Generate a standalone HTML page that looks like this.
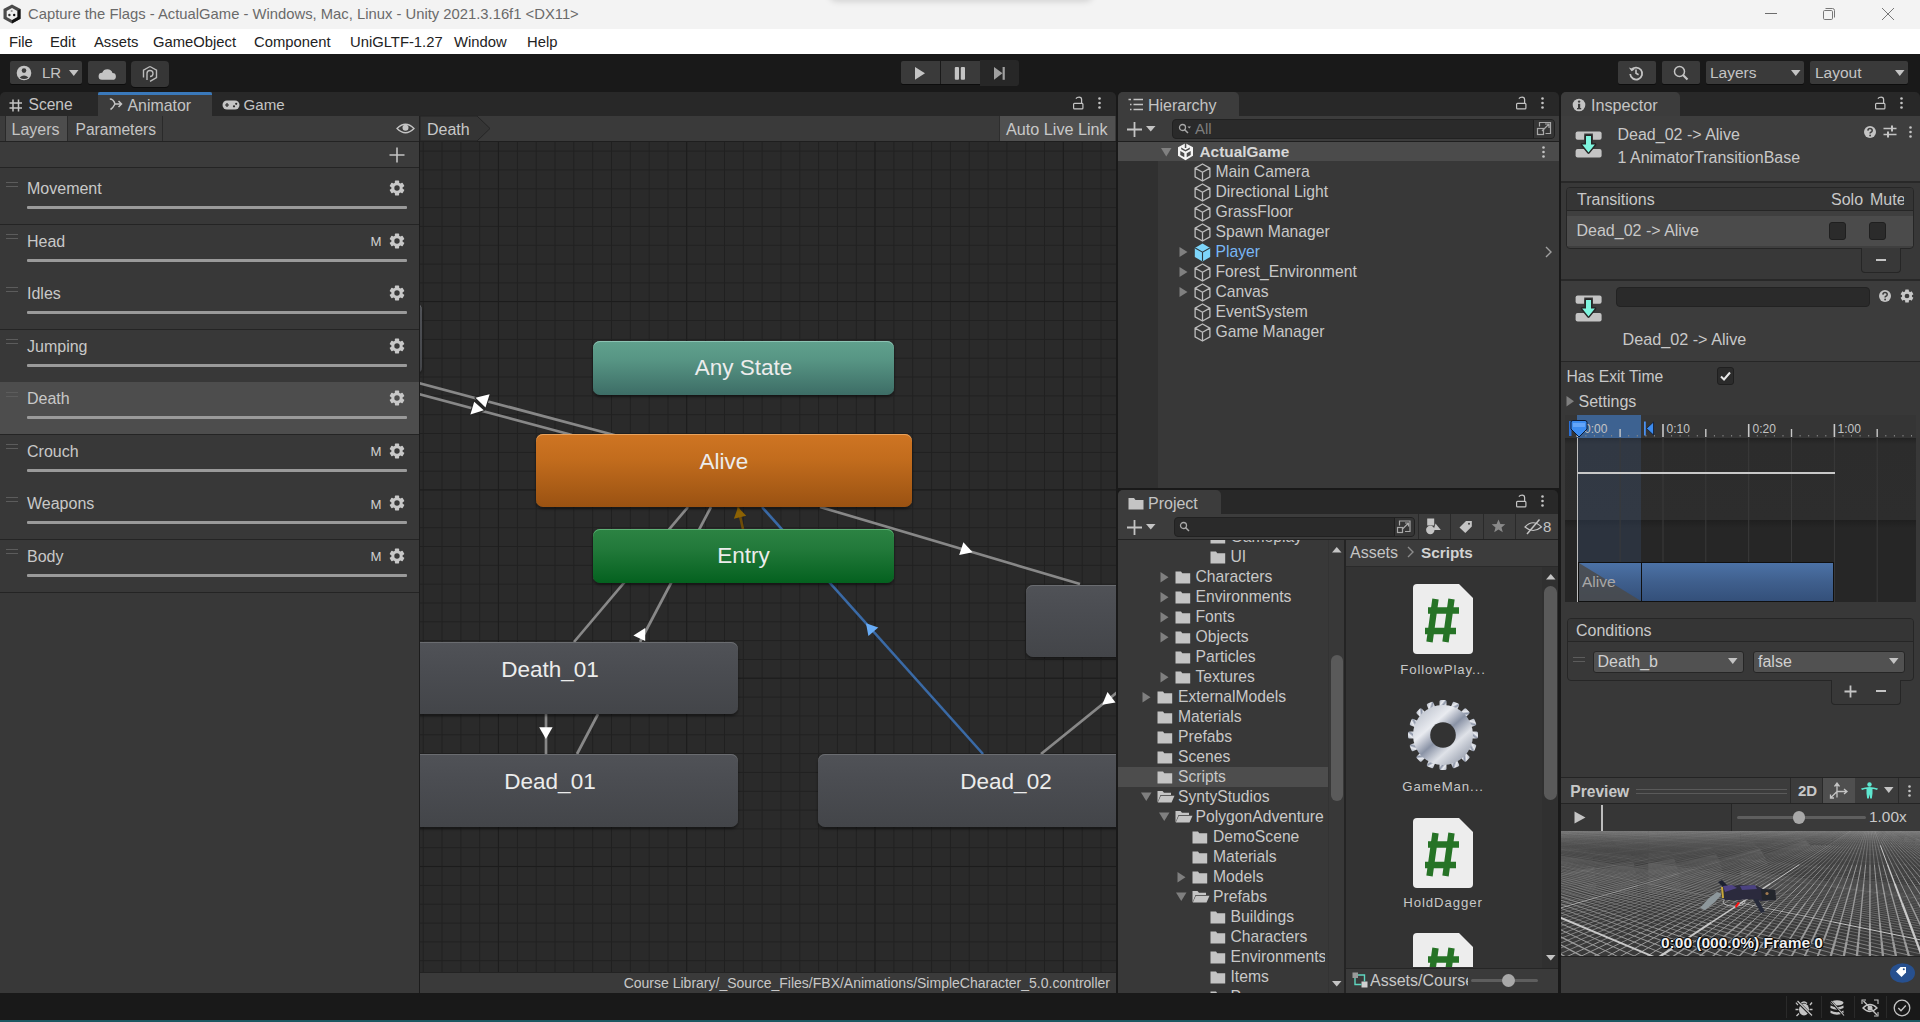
<!DOCTYPE html><html><head><meta charset="utf-8"><style>
html,body{margin:0;padding:0;width:1920px;height:1022px;overflow:hidden;background:#191919;}
body{position:relative;font-family:"Liberation Sans",sans-serif;}
.a{position:absolute;}
.t{white-space:nowrap;}
svg{overflow:visible;}
</style></head><body>
<div class="a" style="left:0px;top:0px;width:1920px;height:29px;background:#f3f3f3;"></div>
<div class="a" style="left:830px;top:-20px;width:262px;height:20px;background:#f3f3f3;box-shadow:0 1px 7px rgba(0,0,0,0.16);border-radius:0 0 6px 6px;"></div>
<div class="a t" style="top:5.0px;line-height:19px;font-size:14.8px;color:#6a6a6a;left:28px;">Capture the Flags - ActualGame - Windows, Mac, Linux - Unity 2021.3.16f1 &lt;DX11&gt;</div>
<svg class="a" style="left:3px;top:4px;" width="18" height="20" viewBox="0 0 18 20"><path d="M9 0.4 L17.5 5 V14.8 L9 19.4 L0.5 14.8 V5Z" fill="#4a4a4a"/><path d="M17.5 5 V14.8 L9 19.4 V16 L14.3 13 V7Z" fill="#111"/><path d="M9 4 L14.3 7 V13 L9 16 L3.7 13 V7Z" fill="#f0f0f0"/><circle cx="8.7" cy="7" r="1.1" fill="#999"/><circle cx="6.4" cy="11" r="1.2" fill="#333"/><circle cx="11.2" cy="11" r="1.2" fill="#111"/></svg>
<div class="a" style="left:1765px;top:13px;width:12px;height:1px;background:#6c6c6c;"></div>
<svg class="a" style="left:1822px;top:7px;" width="14" height="14" viewBox="0 0 14 14"><rect x="1.5" y="3.5" width="9" height="9" rx="1.2" fill="none" stroke="#777" stroke-width="1"/><path d="M3.5 1.5 H10.5 Q12.5 1.5 12.5 3.5 V10.5" fill="none" stroke="#777" stroke-width="1"/></svg>
<svg class="a" style="left:1881px;top:7px;" width="14" height="14" viewBox="0 0 14 14"><path d="M1 1 L13 13 M13 1 L1 13" stroke="#777" stroke-width="1"/></svg>
<div class="a" style="left:0px;top:29px;width:1920px;height:25px;background:#ffffff;"></div>
<div class="a t" style="top:32.5px;line-height:19px;font-size:14.8px;color:#222222;left:9px;">File</div>
<div class="a t" style="top:32.5px;line-height:19px;font-size:14.8px;color:#222222;left:50px;">Edit</div>
<div class="a t" style="top:32.5px;line-height:19px;font-size:14.8px;color:#222222;left:94px;">Assets</div>
<div class="a t" style="top:32.5px;line-height:19px;font-size:14.8px;color:#222222;left:153px;">GameObject</div>
<div class="a t" style="top:32.5px;line-height:19px;font-size:14.8px;color:#222222;left:254px;">Component</div>
<div class="a t" style="top:32.5px;line-height:19px;font-size:14.8px;color:#222222;left:350px;">UniGLTF-1.27</div>
<div class="a t" style="top:32.5px;line-height:19px;font-size:14.8px;color:#222222;left:454px;">Window</div>
<div class="a t" style="top:32.5px;line-height:19px;font-size:14.8px;color:#222222;left:527px;">Help</div>
<div class="a" style="left:0px;top:54px;width:1920px;height:38px;background:#191919;"></div>
<div class="a" style="left:10px;top:61px;width:72px;height:23px;background:#3a3a3a;border-radius:2px;box-shadow:0 1px 0 #0d0d0d;"></div>
<svg class="a" style="left:16px;top:65px;" width="16" height="16" viewBox="0 0 16 16"><circle cx="8" cy="8" r="7.3" fill="#c4c4c4"/><circle cx="8" cy="5.6" r="2.3" fill="#3a3a3a"/><path d="M3.6 12.6 Q8 8.6 12.4 12.6 Q8 15.6 3.6 12.6Z" fill="#3a3a3a"/></svg>
<div class="a t" style="top:63.0px;line-height:20px;font-size:15px;color:#c4c4c4;left:42px;">LR</div>
<svg class="a" style="left:69px;top:70px;" width="10" height="6" viewBox="0 0 10 6"><path d="M0 0 H9.5 L4.75 6 Z" fill="#c4c4c4"/></svg>
<div class="a" style="left:88px;top:61px;width:38px;height:23px;background:#3a3a3a;border-radius:2px;box-shadow:0 1px 0 #0d0d0d;"></div>
<svg class="a" style="left:98px;top:67px;" width="18" height="13" viewBox="0 0 18 13"><path d="M4 12.8 H14.5 A3.4 3.4 0 0 0 14.5 6 A5.5 5.5 0 0 0 4.2 5.8 A3.5 3.5 0 0 0 4 12.8Z" fill="#c4c4c4"/></svg>
<div class="a" style="left:131px;top:61px;width:38px;height:26px;background:#363636;border-radius:4px;box-shadow:0 1px 0 #0d0d0d;"></div>
<svg class="a" style="left:141px;top:65px;" width="18" height="18" viewBox="0 0 18 18"><path d="M9 1.5 L15.5 5.2 V12.5 L9 16.3" fill="none" stroke="#bbb" stroke-width="1.4"/><path d="M9 1.5 L2.5 5.2 V12.5" fill="none" stroke="#bbb" stroke-width="1.4"/><path d="M6 15 V8.5 A3 3 0 1 1 9 11.5" fill="none" stroke="#bbb" stroke-width="1.4"/></svg>
<div class="a" style="left:901px;top:61px;width:79px;height:23px;background:#3a3a3a;border-radius:2px 0 0 2px;box-shadow:0 1px 0 #0d0d0d;"></div>
<div class="a" style="left:940px;top:61px;width:1px;height:23px;background:#1a1a1a;"></div>
<div class="a" style="left:980px;top:60px;width:39px;height:26px;background:#272727;border-radius:0 3px 3px 0;"></div>
<svg class="a" style="left:914px;top:66px;" width="12" height="15" viewBox="0 0 12 15"><path d="M1 1 L11 7.3 L1 13.8Z" fill="#c4c4c4"/></svg>
<svg class="a" style="left:954px;top:66px;" width="12" height="15" viewBox="0 0 12 15"><rect x="0.8" y="1" width="4.2" height="12.8" rx="1" fill="#c4c4c4"/><rect x="6.8" y="1" width="4.2" height="12.8" rx="1" fill="#c4c4c4"/></svg>
<svg class="a" style="left:993px;top:66px;" width="13" height="15" viewBox="0 0 13 15"><path d="M1 1 L9.5 7.3 L1 13.8Z" fill="#a0a0a0"/><rect x="9.6" y="1" width="2.2" height="12.8" fill="#a0a0a0"/></svg>
<div class="a" style="left:1618px;top:61px;width:38px;height:23px;background:#3a3a3a;border-radius:2px;box-shadow:0 1px 0 #0d0d0d;"></div>
<div class="a" style="left:1662px;top:61px;width:38px;height:23px;background:#3a3a3a;border-radius:2px;box-shadow:0 1px 0 #0d0d0d;"></div>
<svg class="a" style="left:1628px;top:65px;" width="16" height="16" viewBox="0 0 16 16"><path d="M3.2 5.2 A6 6 0 1 1 2.2 9" fill="none" stroke="#c4c4c4" stroke-width="1.8"/><path d="M0.8 2.5 L3.6 6.2 L6.8 4.4Z" fill="#c4c4c4"/><path d="M8 4.5 V8.3 L10.6 9.8" fill="none" stroke="#c4c4c4" stroke-width="1.6"/></svg>
<svg class="a" style="left:1673px;top:65px;" width="16" height="16" viewBox="0 0 16 16"><circle cx="6.5" cy="6.5" r="5" fill="none" stroke="#c4c4c4" stroke-width="1.5"/><path d="M10 10 L14.5 14.5" stroke="#c4c4c4" stroke-width="2.2"/></svg>
<div class="a" style="left:1706px;top:61px;width:98px;height:23px;background:#3a3a3a;border-radius:2px;box-shadow:0 1px 0 #0d0d0d;"></div>
<div class="a" style="left:1810px;top:61px;width:98px;height:23px;background:#3a3a3a;border-radius:2px;box-shadow:0 1px 0 #0d0d0d;"></div>
<div class="a t" style="top:63.0px;line-height:20px;font-size:15.5px;color:#c4c4c4;left:1710px;">Layers</div>
<svg class="a" style="left:1791px;top:70px;" width="10" height="7" viewBox="0 0 10 7"><path d="M0 0 H9.5 L4.75 6 Z" fill="#c4c4c4"/></svg>
<div class="a t" style="top:63.0px;line-height:20px;font-size:15.5px;color:#c4c4c4;left:1815px;">Layout</div>
<svg class="a" style="left:1895px;top:70px;" width="10" height="7" viewBox="0 0 10 7"><path d="M0 0 H9.5 L4.75 6 Z" fill="#c4c4c4"/></svg>
<div class="a" style="left:0px;top:92px;width:1116px;height:24px;background:#282828;border-radius:5px 5px 0 0;"></div>
<div class="a" style="left:98px;top:92px;width:114px;height:24px;background:#3c3c3c;"></div>
<div class="a" style="left:98px;top:92px;width:114px;height:3px;background:#3a79bb;border-radius:2px 2px 0 0;"></div>
<div class="a t" style="top:95.0px;line-height:20px;font-size:15.6px;color:#c4c4c4;left:28.5px;">Scene</div>
<svg class="a" style="left:9px;top:99px;" width="14" height="13" viewBox="0 0 14 13"><path d="M4 0.5 V12.5 M9.5 0.5 V12.5 M0.5 4 H13 M0.5 9 H13" stroke="#c4c4c4" stroke-width="1.5"/></svg>
<div class="a t" style="top:94.5px;line-height:21px;font-size:15.9px;color:#c4c4c4;left:127.5px;">Animator</div>
<svg class="a" style="left:109px;top:98px;" width="14" height="13" viewBox="0 0 14 13"><path d="M0.8 1 Q4.5 1 6 6 L12.5 6 M9.5 3 L12.5 6 L9.5 9 M6 6 Q4 10 1.5 11.5" fill="none" stroke="#c4c4c4" stroke-width="1.5"/></svg>
<div class="a t" style="top:95.0px;line-height:20px;font-size:15.1px;color:#c4c4c4;left:243.5px;">Game</div>
<svg class="a" style="left:222px;top:100px;" width="18" height="10" viewBox="0 0 18 10"><rect x="0.5" y="0.5" width="17" height="9" rx="4.5" fill="#c4c4c4"/><path d="M3 5 H7 M5 3 V7" stroke="#282828" stroke-width="1.2"/><circle cx="12" cy="6.3" r="1.1" fill="#282828"/><circle cx="14.2" cy="3.8" r="1.1" fill="#282828"/></svg>
<svg class="a" style="left:1073px;top:96px;" width="11" height="14" viewBox="0 0 11 14"><path d="M8.6 7.4 V3.6 Q8.6 1.2 6.1 1.2 Q4 1.2 2.9 2.7" fill="none" stroke="#c4c4c4" stroke-width="1.25"/><rect x="0.6" y="7.4" width="9.3" height="5.5" rx="0.9" fill="none" stroke="#c4c4c4" stroke-width="1.2"/></svg>
<svg class="a" style="left:1097px;top:96px;" width="5" height="14" viewBox="0 0 5 14"><circle cx="2.5" cy="2.5" r="1.3" fill="#c4c4c4"/><circle cx="2.5" cy="7" r="1.3" fill="#c4c4c4"/><circle cx="2.5" cy="11.5" r="1.3" fill="#c4c4c4"/></svg>
<div class="a" style="left:0px;top:116px;width:419px;height:25px;background:#3c3c3c;"></div>
<div class="a" style="left:0px;top:141px;width:419px;height:1px;background:#232323;"></div>
<div class="a" style="left:6px;top:116px;width:61px;height:25px;background:#4d4d4d;"></div>
<div class="a" style="left:5px;top:116px;width:1px;height:25px;background:#2a2a2a;"></div>
<div class="a" style="left:67px;top:116px;width:1px;height:25px;background:#2a2a2a;"></div>
<div class="a" style="left:162px;top:116px;width:1px;height:25px;background:#2a2a2a;"></div>
<div class="a t" style="top:119.3px;line-height:21px;font-size:16px;color:#c4c4c4;left:11.5px;">Layers</div>
<div class="a t" style="top:120.2px;line-height:20px;font-size:15.6px;color:#c4c4c4;left:75.5px;">Parameters</div>
<svg class="a" style="left:396px;top:123px;" width="19" height="11" viewBox="0 0 19 11"><path d="M1 5.5 Q9.5 -3 18 5.5 Q9.5 14 1 5.5Z" fill="none" stroke="#c4c4c4" stroke-width="1.3"/><circle cx="9.5" cy="4.8" r="3" fill="#c4c4c4"/></svg>
<div class="a" style="left:0px;top:142px;width:419px;height:851px;background:#383838;"></div>
<div class="a" style="left:0px;top:142px;width:419px;height:25px;background:#3b3b3b;"></div>
<div class="a" style="left:0px;top:167px;width:419px;height:1px;background:#242424;"></div>
<svg class="a" style="left:389px;top:147px;" width="16" height="16" viewBox="0 0 16 16"><path d="M8 0.5 V15.5 M0.5 8 H15.5" stroke="#c4c4c4" stroke-width="1.6"/></svg>
<svg class="a" style="left:6px;top:182px;" width="13" height="6" viewBox="0 0 13 6"><path d="M0 0.5 H12 M0 4.5 H12" stroke="#5c5c5c" stroke-width="1"/></svg>
<div class="a t" style="top:178.2px;line-height:21px;font-size:16px;color:#c8c8c8;left:27px;">Movement</div>
<div class="a" style="left:27px;top:206px;width:380px;height:3px;background:#9a9a9a;border-radius:1px;"></div>
<svg class="a" style="left:389px;top:180px;" width="16" height="16" viewBox="0 0 16 16"><g fill="#c8c8c8"><rect x="5.9" y="0.6" width="4.2" height="4" rx="0.6" transform="rotate(0 8 8)"/><rect x="5.9" y="0.6" width="4.2" height="4" rx="0.6" transform="rotate(60 8 8)"/><rect x="5.9" y="0.6" width="4.2" height="4" rx="0.6" transform="rotate(120 8 8)"/><rect x="5.9" y="0.6" width="4.2" height="4" rx="0.6" transform="rotate(180 8 8)"/><rect x="5.9" y="0.6" width="4.2" height="4" rx="0.6" transform="rotate(240 8 8)"/><rect x="5.9" y="0.6" width="4.2" height="4" rx="0.6" transform="rotate(300 8 8)"/><circle cx="8" cy="8" r="5.7"/></g><circle cx="8" cy="8" r="2.7" fill="#383838"/></svg>
<svg class="a" style="left:6px;top:234px;" width="13" height="6" viewBox="0 0 13 6"><path d="M0 0.5 H12 M0 4.5 H12" stroke="#5c5c5c" stroke-width="1"/></svg>
<div class="a t" style="top:230.7px;line-height:21px;font-size:16px;color:#c8c8c8;left:27px;">Head</div>
<div class="a" style="left:27px;top:259px;width:380px;height:3px;background:#9a9a9a;border-radius:1px;"></div>
<div class="a t" style="top:233.0px;line-height:17px;font-size:13.2px;color:#d0d0d0;left:370.5px;">M</div>
<svg class="a" style="left:389px;top:233px;" width="16" height="16" viewBox="0 0 16 16"><g fill="#c8c8c8"><rect x="5.9" y="0.6" width="4.2" height="4" rx="0.6" transform="rotate(0 8 8)"/><rect x="5.9" y="0.6" width="4.2" height="4" rx="0.6" transform="rotate(60 8 8)"/><rect x="5.9" y="0.6" width="4.2" height="4" rx="0.6" transform="rotate(120 8 8)"/><rect x="5.9" y="0.6" width="4.2" height="4" rx="0.6" transform="rotate(180 8 8)"/><rect x="5.9" y="0.6" width="4.2" height="4" rx="0.6" transform="rotate(240 8 8)"/><rect x="5.9" y="0.6" width="4.2" height="4" rx="0.6" transform="rotate(300 8 8)"/><circle cx="8" cy="8" r="5.7"/></g><circle cx="8" cy="8" r="2.7" fill="#383838"/></svg>
<svg class="a" style="left:6px;top:287px;" width="13" height="6" viewBox="0 0 13 6"><path d="M0 0.5 H12 M0 4.5 H12" stroke="#5c5c5c" stroke-width="1"/></svg>
<div class="a t" style="top:283.2px;line-height:21px;font-size:16px;color:#c8c8c8;left:27px;">Idles</div>
<div class="a" style="left:27px;top:311px;width:380px;height:3px;background:#9a9a9a;border-radius:1px;"></div>
<svg class="a" style="left:389px;top:285px;" width="16" height="16" viewBox="0 0 16 16"><g fill="#c8c8c8"><rect x="5.9" y="0.6" width="4.2" height="4" rx="0.6" transform="rotate(0 8 8)"/><rect x="5.9" y="0.6" width="4.2" height="4" rx="0.6" transform="rotate(60 8 8)"/><rect x="5.9" y="0.6" width="4.2" height="4" rx="0.6" transform="rotate(120 8 8)"/><rect x="5.9" y="0.6" width="4.2" height="4" rx="0.6" transform="rotate(180 8 8)"/><rect x="5.9" y="0.6" width="4.2" height="4" rx="0.6" transform="rotate(240 8 8)"/><rect x="5.9" y="0.6" width="4.2" height="4" rx="0.6" transform="rotate(300 8 8)"/><circle cx="8" cy="8" r="5.7"/></g><circle cx="8" cy="8" r="2.7" fill="#383838"/></svg>
<svg class="a" style="left:6px;top:339px;" width="13" height="6" viewBox="0 0 13 6"><path d="M0 0.5 H12 M0 4.5 H12" stroke="#5c5c5c" stroke-width="1"/></svg>
<div class="a t" style="top:335.7px;line-height:21px;font-size:16px;color:#c8c8c8;left:27px;">Jumping</div>
<div class="a" style="left:27px;top:364px;width:380px;height:3px;background:#9a9a9a;border-radius:1px;"></div>
<svg class="a" style="left:389px;top:338px;" width="16" height="16" viewBox="0 0 16 16"><g fill="#c8c8c8"><rect x="5.9" y="0.6" width="4.2" height="4" rx="0.6" transform="rotate(0 8 8)"/><rect x="5.9" y="0.6" width="4.2" height="4" rx="0.6" transform="rotate(60 8 8)"/><rect x="5.9" y="0.6" width="4.2" height="4" rx="0.6" transform="rotate(120 8 8)"/><rect x="5.9" y="0.6" width="4.2" height="4" rx="0.6" transform="rotate(180 8 8)"/><rect x="5.9" y="0.6" width="4.2" height="4" rx="0.6" transform="rotate(240 8 8)"/><rect x="5.9" y="0.6" width="4.2" height="4" rx="0.6" transform="rotate(300 8 8)"/><circle cx="8" cy="8" r="5.7"/></g><circle cx="8" cy="8" r="2.7" fill="#383838"/></svg>
<div class="a" style="left:0px;top:382px;width:419px;height:52px;background:#4d4d4d;"></div>
<svg class="a" style="left:6px;top:392px;" width="13" height="6" viewBox="0 0 13 6"><path d="M0 0.5 H12 M0 4.5 H12" stroke="#5c5c5c" stroke-width="1"/></svg>
<div class="a t" style="top:388.2px;line-height:21px;font-size:16px;color:#c8c8c8;left:27px;">Death</div>
<div class="a" style="left:27px;top:416px;width:380px;height:3px;background:#9a9a9a;border-radius:1px;"></div>
<svg class="a" style="left:389px;top:390px;" width="16" height="16" viewBox="0 0 16 16"><g fill="#c8c8c8"><rect x="5.9" y="0.6" width="4.2" height="4" rx="0.6" transform="rotate(0 8 8)"/><rect x="5.9" y="0.6" width="4.2" height="4" rx="0.6" transform="rotate(60 8 8)"/><rect x="5.9" y="0.6" width="4.2" height="4" rx="0.6" transform="rotate(120 8 8)"/><rect x="5.9" y="0.6" width="4.2" height="4" rx="0.6" transform="rotate(180 8 8)"/><rect x="5.9" y="0.6" width="4.2" height="4" rx="0.6" transform="rotate(240 8 8)"/><rect x="5.9" y="0.6" width="4.2" height="4" rx="0.6" transform="rotate(300 8 8)"/><circle cx="8" cy="8" r="5.7"/></g><circle cx="8" cy="8" r="2.7" fill="#4d4d4d"/></svg>
<svg class="a" style="left:6px;top:444px;" width="13" height="6" viewBox="0 0 13 6"><path d="M0 0.5 H12 M0 4.5 H12" stroke="#5c5c5c" stroke-width="1"/></svg>
<div class="a t" style="top:440.7px;line-height:21px;font-size:16px;color:#c8c8c8;left:27px;">Crouch</div>
<div class="a" style="left:27px;top:469px;width:380px;height:3px;background:#9a9a9a;border-radius:1px;"></div>
<div class="a t" style="top:443.0px;line-height:17px;font-size:13.2px;color:#d0d0d0;left:370.5px;">M</div>
<svg class="a" style="left:389px;top:443px;" width="16" height="16" viewBox="0 0 16 16"><g fill="#c8c8c8"><rect x="5.9" y="0.6" width="4.2" height="4" rx="0.6" transform="rotate(0 8 8)"/><rect x="5.9" y="0.6" width="4.2" height="4" rx="0.6" transform="rotate(60 8 8)"/><rect x="5.9" y="0.6" width="4.2" height="4" rx="0.6" transform="rotate(120 8 8)"/><rect x="5.9" y="0.6" width="4.2" height="4" rx="0.6" transform="rotate(180 8 8)"/><rect x="5.9" y="0.6" width="4.2" height="4" rx="0.6" transform="rotate(240 8 8)"/><rect x="5.9" y="0.6" width="4.2" height="4" rx="0.6" transform="rotate(300 8 8)"/><circle cx="8" cy="8" r="5.7"/></g><circle cx="8" cy="8" r="2.7" fill="#383838"/></svg>
<svg class="a" style="left:6px;top:497px;" width="13" height="6" viewBox="0 0 13 6"><path d="M0 0.5 H12 M0 4.5 H12" stroke="#5c5c5c" stroke-width="1"/></svg>
<div class="a t" style="top:493.2px;line-height:21px;font-size:16px;color:#c8c8c8;left:27px;">Weapons</div>
<div class="a" style="left:27px;top:521px;width:380px;height:3px;background:#9a9a9a;border-radius:1px;"></div>
<div class="a t" style="top:495.5px;line-height:17px;font-size:13.2px;color:#d0d0d0;left:370.5px;">M</div>
<svg class="a" style="left:389px;top:495px;" width="16" height="16" viewBox="0 0 16 16"><g fill="#c8c8c8"><rect x="5.9" y="0.6" width="4.2" height="4" rx="0.6" transform="rotate(0 8 8)"/><rect x="5.9" y="0.6" width="4.2" height="4" rx="0.6" transform="rotate(60 8 8)"/><rect x="5.9" y="0.6" width="4.2" height="4" rx="0.6" transform="rotate(120 8 8)"/><rect x="5.9" y="0.6" width="4.2" height="4" rx="0.6" transform="rotate(180 8 8)"/><rect x="5.9" y="0.6" width="4.2" height="4" rx="0.6" transform="rotate(240 8 8)"/><rect x="5.9" y="0.6" width="4.2" height="4" rx="0.6" transform="rotate(300 8 8)"/><circle cx="8" cy="8" r="5.7"/></g><circle cx="8" cy="8" r="2.7" fill="#383838"/></svg>
<svg class="a" style="left:6px;top:549px;" width="13" height="6" viewBox="0 0 13 6"><path d="M0 0.5 H12 M0 4.5 H12" stroke="#5c5c5c" stroke-width="1"/></svg>
<div class="a t" style="top:545.7px;line-height:21px;font-size:16px;color:#c8c8c8;left:27px;">Body</div>
<div class="a" style="left:27px;top:574px;width:380px;height:3px;background:#9a9a9a;border-radius:1px;"></div>
<div class="a t" style="top:548.0px;line-height:17px;font-size:13.2px;color:#d0d0d0;left:370.5px;">M</div>
<svg class="a" style="left:389px;top:548px;" width="16" height="16" viewBox="0 0 16 16"><g fill="#c8c8c8"><rect x="5.9" y="0.6" width="4.2" height="4" rx="0.6" transform="rotate(0 8 8)"/><rect x="5.9" y="0.6" width="4.2" height="4" rx="0.6" transform="rotate(60 8 8)"/><rect x="5.9" y="0.6" width="4.2" height="4" rx="0.6" transform="rotate(120 8 8)"/><rect x="5.9" y="0.6" width="4.2" height="4" rx="0.6" transform="rotate(180 8 8)"/><rect x="5.9" y="0.6" width="4.2" height="4" rx="0.6" transform="rotate(240 8 8)"/><rect x="5.9" y="0.6" width="4.2" height="4" rx="0.6" transform="rotate(300 8 8)"/><circle cx="8" cy="8" r="5.7"/></g><circle cx="8" cy="8" r="2.7" fill="#383838"/></svg>
<div class="a" style="left:0px;top:224px;width:419px;height:1px;background:#242424;"></div>
<div class="a" style="left:0px;top:329px;width:419px;height:1px;background:#242424;"></div>
<div class="a" style="left:0px;top:434px;width:419px;height:1px;background:#242424;"></div>
<div class="a" style="left:0px;top:539px;width:419px;height:1px;background:#242424;"></div>
<div class="a" style="left:0px;top:592px;width:419px;height:1px;background:#242424;"></div>
<div class="a" style="left:419px;top:116px;width:1px;height:877px;background:#1c1c1c;"></div>
<div class="a" style="left:420px;top:116px;width:696px;height:25px;background:#3a3a3a;"></div>
<div class="a" style="left:420px;top:141px;width:696px;height:1px;background:#1e1e1e;"></div>
<svg class="a" style="left:420px;top:116px;" width="72" height="25" viewBox="0 0 72 25"><path d="M0 0 H57 L70 12.5 L57 25 H0Z" fill="#353535" stroke="#252525" stroke-width="1"/></svg>
<div class="a t" style="top:118.5px;line-height:21px;font-size:16px;color:#c8c8c8;left:427px;">Death</div>
<div class="a" style="left:1000px;top:116px;width:115px;height:25px;background:#505050;"></div>
<div class="a" style="left:999px;top:116px;width:1px;height:25px;background:#2e2e2e;"></div>
<div class="a t" style="top:118.5px;line-height:21px;font-size:16.2px;color:#c8c8c8;left:1006px;">Auto Live Link</div>
<div class="a" style="left:420px;top:142px;width:696px;height:830px;background-color:#2a2a2a;background-image:linear-gradient(90deg, #1c1c1c 0 1.3px, transparent 1.3px),linear-gradient(180deg, #1c1c1c 0 1.3px, transparent 1.3px),linear-gradient(90deg, #202020 0 1.1px, transparent 1.1px),linear-gradient(180deg, #202020 0 1.1px, transparent 1.1px);background-size:188.3px 188.3px,188.3px 188.3px,18.83px 18.83px,18.83px 18.83px;background-position:77.85px 0,0 159.05px,2.73px 0,0 8.61px;"></div>
<div class="a" style="left:420px;top:972px;width:696px;height:21px;background:#3a3a3a;border-top:1px solid #232323;box-sizing:border-box;"></div>
<div class="a t" style="top:973.5px;line-height:18px;font-size:14px;color:#c8c8c8;right:810px;">Course Library/_Source_Files/FBX/Animations/SimpleCharacter_5.0.controller</div>
<svg class="a" style="left:420px;top:142px;overflow:hidden;" width="696" height="830" viewBox="0 0 696 830"><line x1="-20" y1="236" x2="196" y2="293.5" stroke="#888888" stroke-width="2.7"/><line x1="-20" y1="247" x2="152" y2="293" stroke="#888888" stroke-width="2.7"/><path d="M55.5 255.7 L69.6 252.2 L65.5 265.6Z" fill="#262626" stroke="#262626" stroke-width="2" stroke-linejoin="round"/><path d="M55.5 255.7 L69.6 252.2 L65.5 265.6Z" fill="#ffffff"/><path d="M54.2 259.8 L50.4 272.5 L63.8 268.3Z" fill="#262626" stroke="#262626" stroke-width="2" stroke-linejoin="round"/><path d="M54.2 259.8 L50.4 272.5 L63.8 268.3Z" fill="#ffffff"/><line x1="154" y1="500" x2="268" y2="365" stroke="#888888" stroke-width="2.7"/><line x1="220" y1="500" x2="291" y2="365" stroke="#888888" stroke-width="2.7"/><path d="M213.4 493.5 L225.2 486.0 L225.2 499.0Z" fill="#ffffff"/><line x1="323" y1="387" x2="318" y2="365" stroke="#6e4c08" stroke-width="2.6"/><path d="M318.0 365.2 L326.2 373.8 L313.9 376.8Z" fill="#8c6204"/><line x1="563" y1="612" x2="342" y2="365" stroke="#3a6aa6" stroke-width="2.6"/><path d="M446.0 481.2 L458.3 485.5 L448.4 494.0Z" fill="#68acf6"/><line x1="400" y1="365" x2="660" y2="442" stroke="#888888" stroke-width="2.7"/><path d="M543.4 400.3 L552.6 410.2 L539.2 412.9Z" fill="#ffffff"/><line x1="621" y1="612" x2="705" y2="544" stroke="#888888" stroke-width="2.7"/><path d="M687.5 550.0 L695.5 560.6 L682.2 562.7Z" fill="#ffffff"/><line x1="126" y1="572" x2="126" y2="612" stroke="#888888" stroke-width="2.7"/><path d="M119.2 585.2 L132.6 585.2 L125.9 597.0Z" fill="#ffffff"/><line x1="157" y1="612" x2="178" y2="572" stroke="#888888" stroke-width="2.7"/></svg>
<div class="a" style="left:420px;top:142px;width:696px;height:830px;overflow:hidden;">
<div class="a" style="left:-58px;top:161px;width:60px;height:71px;border-radius:7px;background:linear-gradient(180deg,#505257 0%,#4b4d52 35%,#434549 100%);box-shadow:inset 0 1px 0 #6a6c70, 0 2px 3px rgba(0,0,0,0.45);"></div>
<div class="a" style="left:173px;top:199px;width:301px;height:54px;border-radius:7px;background:linear-gradient(180deg,#60a18d 0%,#579584 35%,#3d6d66 100%);box-shadow:inset 0 1px 0 #8cc3b3, 0 2px 3px rgba(0,0,0,0.45);"></div>
<div class="a t" style="left:173px;top:211.0px;width:301px;text-align:center;line-height:30px;font-size:22.5px;color:#ececec;">Any State</div>
<div class="a" style="left:116px;top:292px;width:376px;height:73px;border-radius:7px;background:linear-gradient(180deg,#cf7523 0%,#c26c1d 35%,#9a5212 100%);box-shadow:inset 0 1px 0 #e9a25c, 0 2px 3px rgba(0,0,0,0.45);"></div>
<div class="a t" style="left:116px;top:305.0px;width:376px;text-align:center;line-height:30px;font-size:22.5px;color:#ececec;">Alive</div>
<div class="a" style="left:173px;top:387px;width:301px;height:54px;border-radius:7px;background:linear-gradient(180deg,#2c8343 0%,#237a3b 35%,#04611f 100%);box-shadow:inset 0 1px 0 #5db275, 0 2px 3px rgba(0,0,0,0.45);"></div>
<div class="a t" style="left:173px;top:399.0px;width:301px;text-align:center;line-height:30px;font-size:22.5px;color:#ececec;">Entry</div>
<div class="a" style="left:-58px;top:500px;width:376px;height:72px;border-radius:7px;background:linear-gradient(180deg,#505257 0%,#4b4d52 35%,#434549 100%);box-shadow:inset 0 1px 0 #6a6c70, 0 2px 3px rgba(0,0,0,0.45);"></div>
<div class="a t" style="left:-58px;top:512.5px;width:376px;text-align:center;line-height:30px;font-size:22.5px;color:#ececec;">Death_01</div>
<div class="a" style="left:-58px;top:612px;width:376px;height:73px;border-radius:7px;background:linear-gradient(180deg,#505257 0%,#4b4d52 35%,#434549 100%);box-shadow:inset 0 1px 0 #6a6c70, 0 2px 3px rgba(0,0,0,0.45);"></div>
<div class="a t" style="left:-58px;top:625.0px;width:376px;text-align:center;line-height:30px;font-size:22.5px;color:#ececec;">Dead_01</div>
<div class="a" style="left:398px;top:612px;width:376px;height:73px;border-radius:7px;background:linear-gradient(180deg,#505257 0%,#4b4d52 35%,#434549 100%);box-shadow:inset 0 1px 0 #6a6c70, 0 2px 3px rgba(0,0,0,0.45);"></div>
<div class="a t" style="left:398px;top:625.0px;width:376px;text-align:center;line-height:30px;font-size:22.5px;color:#ececec;">Dead_02</div>
<div class="a" style="left:606px;top:443px;width:200px;height:72px;border-radius:7px;background:linear-gradient(180deg,#505257 0%,#4b4d52 35%,#434549 100%);box-shadow:inset 0 1px 0 #6a6c70, 0 2px 3px rgba(0,0,0,0.45);"></div>
</div>
<div class="a" style="left:1118px;top:92px;width:441px;height:24px;background:#282828;border-radius:5px 5px 0 0;"></div>
<div class="a" style="left:1118px;top:92px;width:121px;height:24px;background:#3c3c3c;border-radius:5px 5px 0 0;"></div>
<svg class="a" style="left:1128px;top:98px;" width="16" height="13" viewBox="0 0 16 13"><path d="M5.5 1.5 H15 M5.5 6.5 H15 M5.5 11.5 H15" stroke="#c4c4c4" stroke-width="1.5"/><path d="M0.5 1.5 H3 M2 6.5 H3.5 M2 11.5 H3.5" stroke="#c4c4c4" stroke-width="1.5"/></svg>
<div class="a t" style="top:94.5px;line-height:21px;font-size:16px;color:#c4c4c4;left:1148px;">Hierarchy</div>
<svg class="a" style="left:1516px;top:96px;" width="11" height="14" viewBox="0 0 11 14"><path d="M8.6 7.4 V3.6 Q8.6 1.2 6.1 1.2 Q4 1.2 2.9 2.7" fill="none" stroke="#c4c4c4" stroke-width="1.25"/><rect x="0.6" y="7.4" width="9.3" height="5.5" rx="0.9" fill="none" stroke="#c4c4c4" stroke-width="1.2"/></svg>
<svg class="a" style="left:1540px;top:96px;" width="5" height="14" viewBox="0 0 5 14"><circle cx="2.5" cy="2.5" r="1.3" fill="#c4c4c4"/><circle cx="2.5" cy="7" r="1.3" fill="#c4c4c4"/><circle cx="2.5" cy="11.5" r="1.3" fill="#c4c4c4"/></svg>
<div class="a" style="left:1118px;top:116px;width:441px;height:25px;background:#3c3c3c;"></div>
<div class="a" style="left:1118px;top:141px;width:441px;height:1px;background:#1f1f1f;"></div>
<svg class="a" style="left:1126px;top:121px;" width="17" height="17" viewBox="0 0 17 17"><path d="M8.5 1 V16 M1 8.5 H16" stroke="#c4c4c4" stroke-width="1.8"/></svg>
<svg class="a" style="left:1146px;top:126px;" width="10" height="6" viewBox="0 0 10 6"><path d="M0 0 H9.5 L4.75 5.5 Z" fill="#c4c4c4"/></svg>
<div class="a" style="left:1172px;top:119px;width:383px;height:20px;background:#2a2a2a;border-radius:4px;border:1px solid #212121;box-sizing:border-box;"></div>
<svg class="a" style="left:1178px;top:123px;" width="14" height="12" viewBox="0 0 14 12"><circle cx="4.5" cy="4.5" r="3" fill="none" stroke="#a8a8a8" stroke-width="1.3"/><path d="M6.5 6.5 L10 10" stroke="#a8a8a8" stroke-width="1.5"/><path d="M9.5 3.5 H13 L11.25 5.5Z" fill="#a8a8a8"/></svg>
<div class="a t" style="top:119.0px;line-height:20px;font-size:15px;color:#7d7d7d;left:1195px;">All</div>
<div class="a" style="left:1533px;top:120px;width:1px;height:18px;background:#1e1e1e;"></div>
<div class="a" style="left:1534px;top:120px;width:20px;height:18px;background:#353535;border-radius:0 3px 3px 0;"></div>
<svg class="a" style="left:1536px;top:121px;" width="17" height="16" viewBox="0 0 17 16"><rect x="1.5" y="7.5" width="6" height="6" fill="none" stroke="#a8a8a8" stroke-width="1.2"/><path d="M3.5 5.5 V1.5 H14.5 V12.5 H9.5 M6 10 L13 3 M9 3 H13 V7" fill="none" stroke="#a8a8a8" stroke-width="1.2"/></svg>
<div class="a" style="left:1118px;top:142px;width:441px;height:346px;background:#383838;"></div>
<div class="a" style="left:1118px;top:161px;width:40px;height:327px;background:#303030;"></div>
<div class="a" style="left:1118px;top:142px;width:441px;height:19px;background:#4b4b4b;"></div>
<svg class="a" style="left:1161px;top:148px;" width="11" height="9" viewBox="0 0 11 9"><path d="M0 0 H10.5 L5.25 8.5 Z" fill="#808080"/></svg>
<svg class="a" style="left:1178px;top:143px;" width="16" height="18" viewBox="0 0 16 18"><path d="M7.5 0.3 L15 4.3 V12.8 L7.5 17.3 L0 12.8 V4.3Z" fill="#f4f4f4"/><rect x="6.8" y="0" width="1.5" height="5" fill="#4b4b4b"/><path d="M3.2 4.6 L7.5 6.9 L11.8 4.6 V6.2 L7.5 8.5 L3.2 6.2Z" fill="#4b4b4b"/><path d="M2.3 8 L6.3 10.2 V14.2 L2.3 12Z M12.7 8 L8.7 10.2 V14.2 L12.7 12Z" fill="#4b4b4b"/></svg>
<div class="a t" style="top:141.5px;line-height:20px;font-size:15.4px;color:#d8d8d8;font-weight:bold;left:1199.5px;">ActualGame</div>
<svg class="a" style="left:1541px;top:145px;" width="5" height="14" viewBox="0 0 5 14"><circle cx="2.5" cy="2.5" r="1.3" fill="#c4c4c4"/><circle cx="2.5" cy="7" r="1.3" fill="#c4c4c4"/><circle cx="2.5" cy="11.5" r="1.3" fill="#c4c4c4"/></svg>
<svg class="a" style="left:1194px;top:162.5px;" width="17" height="19" viewBox="0 0 17 19"><path d="M8.5 1 L15.9 5.1 V13.9 L8.5 18 L1.1 13.9 V5.1Z M1.1 5.1 L8.5 9.2 L15.9 5.1 M8.5 9.2 V18" fill="none" stroke="#bdbdbd" stroke-width="1.3" stroke-linejoin="round"/></svg>
<div class="a t" style="top:162.0px;line-height:20px;font-size:15.7px;color:#c8c8c8;left:1215.5px;">Main Camera</div>
<svg class="a" style="left:1194px;top:182.5px;" width="17" height="19" viewBox="0 0 17 19"><path d="M8.5 1 L15.9 5.1 V13.9 L8.5 18 L1.1 13.9 V5.1Z M1.1 5.1 L8.5 9.2 L15.9 5.1 M8.5 9.2 V18" fill="none" stroke="#bdbdbd" stroke-width="1.3" stroke-linejoin="round"/></svg>
<div class="a t" style="top:182.0px;line-height:20px;font-size:15.7px;color:#c8c8c8;left:1215.5px;">Directional Light</div>
<svg class="a" style="left:1194px;top:202.5px;" width="17" height="19" viewBox="0 0 17 19"><path d="M8.5 1 L15.9 5.1 V13.9 L8.5 18 L1.1 13.9 V5.1Z M1.1 5.1 L8.5 9.2 L15.9 5.1 M8.5 9.2 V18" fill="none" stroke="#bdbdbd" stroke-width="1.3" stroke-linejoin="round"/></svg>
<div class="a t" style="top:202.0px;line-height:20px;font-size:15.7px;color:#c8c8c8;left:1215.5px;">GrassFloor</div>
<svg class="a" style="left:1194px;top:222.5px;" width="17" height="19" viewBox="0 0 17 19"><path d="M8.5 1 L15.9 5.1 V13.9 L8.5 18 L1.1 13.9 V5.1Z M1.1 5.1 L8.5 9.2 L15.9 5.1 M8.5 9.2 V18" fill="none" stroke="#bdbdbd" stroke-width="1.3" stroke-linejoin="round"/></svg>
<div class="a t" style="top:222.0px;line-height:20px;font-size:15.7px;color:#c8c8c8;left:1215.5px;">Spawn Manager</div>
<svg class="a" style="left:1179px;top:247px;" width="9" height="10" viewBox="0 0 9 10"><path d="M0.5 0 L8.5 5 L0.5 10Z" fill="#808080"/></svg>
<svg class="a" style="left:1194px;top:242.5px;" width="17" height="19" viewBox="0 0 17 19"><path d="M8.5 0.6 L16.2 4.9 V14.1 L8.5 18.4 L0.8 14.1 V4.9Z" fill="#7dd6fb"/><path d="M1.2 5.1 L8.5 9.2 L15.8 5.1 M8.5 9.2 V18" fill="none" stroke="#2f3a40" stroke-width="1.1"/></svg>
<div class="a t" style="top:242.0px;line-height:20px;font-size:15.7px;color:#7ab7f5;left:1215.5px;">Player</div>
<svg class="a" style="left:1545px;top:246px;" width="7" height="12" viewBox="0 0 7 12"><path d="M1 1 L6 6 L1 11" fill="none" stroke="#a0a0a0" stroke-width="1.4"/></svg>
<svg class="a" style="left:1179px;top:267px;" width="9" height="10" viewBox="0 0 9 10"><path d="M0.5 0 L8.5 5 L0.5 10Z" fill="#808080"/></svg>
<svg class="a" style="left:1194px;top:262.5px;" width="17" height="19" viewBox="0 0 17 19"><path d="M8.5 1 L15.9 5.1 V13.9 L8.5 18 L1.1 13.9 V5.1Z M1.1 5.1 L8.5 9.2 L15.9 5.1 M8.5 9.2 V18" fill="none" stroke="#bdbdbd" stroke-width="1.3" stroke-linejoin="round"/></svg>
<div class="a t" style="top:262.0px;line-height:20px;font-size:15.7px;color:#c8c8c8;left:1215.5px;">Forest_Environment</div>
<svg class="a" style="left:1179px;top:287px;" width="9" height="10" viewBox="0 0 9 10"><path d="M0.5 0 L8.5 5 L0.5 10Z" fill="#808080"/></svg>
<svg class="a" style="left:1194px;top:282.5px;" width="17" height="19" viewBox="0 0 17 19"><path d="M8.5 1 L15.9 5.1 V13.9 L8.5 18 L1.1 13.9 V5.1Z M1.1 5.1 L8.5 9.2 L15.9 5.1 M8.5 9.2 V18" fill="none" stroke="#bdbdbd" stroke-width="1.3" stroke-linejoin="round"/></svg>
<div class="a t" style="top:282.0px;line-height:20px;font-size:15.7px;color:#c8c8c8;left:1215.5px;">Canvas</div>
<svg class="a" style="left:1194px;top:302.5px;" width="17" height="19" viewBox="0 0 17 19"><path d="M8.5 1 L15.9 5.1 V13.9 L8.5 18 L1.1 13.9 V5.1Z M1.1 5.1 L8.5 9.2 L15.9 5.1 M8.5 9.2 V18" fill="none" stroke="#bdbdbd" stroke-width="1.3" stroke-linejoin="round"/></svg>
<div class="a t" style="top:302.0px;line-height:20px;font-size:15.7px;color:#c8c8c8;left:1215.5px;">EventSystem</div>
<svg class="a" style="left:1194px;top:322.5px;" width="17" height="19" viewBox="0 0 17 19"><path d="M8.5 1 L15.9 5.1 V13.9 L8.5 18 L1.1 13.9 V5.1Z M1.1 5.1 L8.5 9.2 L15.9 5.1 M8.5 9.2 V18" fill="none" stroke="#bdbdbd" stroke-width="1.3" stroke-linejoin="round"/></svg>
<div class="a t" style="top:322.0px;line-height:20px;font-size:15.7px;color:#c8c8c8;left:1215.5px;">Game Manager</div>
<div class="a" style="left:1118px;top:490px;width:440px;height:24px;background:#282828;border-radius:5px 5px 0 0;"></div>
<div class="a" style="left:1118px;top:490px;width:103px;height:24px;background:#3c3c3c;border-radius:5px 5px 0 0;"></div>
<svg class="a" style="left:1128px;top:497px;" width="16" height="13" viewBox="0 0 16 13"><path d="M0.5 1 H6 L7.5 3 H15.5 V12.5 H0.5Z" fill="#c4c4c4"/></svg>
<div class="a t" style="top:492.5px;line-height:21px;font-size:16px;color:#c4c4c4;left:1148px;">Project</div>
<svg class="a" style="left:1516px;top:494px;" width="11" height="14" viewBox="0 0 11 14"><path d="M8.6 7.4 V3.6 Q8.6 1.2 6.1 1.2 Q4 1.2 2.9 2.7" fill="none" stroke="#c4c4c4" stroke-width="1.25"/><rect x="0.6" y="7.4" width="9.3" height="5.5" rx="0.9" fill="none" stroke="#c4c4c4" stroke-width="1.2"/></svg>
<svg class="a" style="left:1540px;top:494px;" width="5" height="14" viewBox="0 0 5 14"><circle cx="2.5" cy="2.5" r="1.3" fill="#c4c4c4"/><circle cx="2.5" cy="7" r="1.3" fill="#c4c4c4"/><circle cx="2.5" cy="11.5" r="1.3" fill="#c4c4c4"/></svg>
<div class="a" style="left:1118px;top:514px;width:440px;height:25px;background:#3c3c3c;"></div>
<div class="a" style="left:1118px;top:539px;width:440px;height:1px;background:#222222;"></div>
<svg class="a" style="left:1126px;top:519px;" width="17" height="17" viewBox="0 0 17 17"><path d="M8.5 1 V16 M1 8.5 H16" stroke="#c4c4c4" stroke-width="1.8"/></svg>
<svg class="a" style="left:1146px;top:524px;" width="10" height="6" viewBox="0 0 10 6"><path d="M0 0 H9.5 L4.75 5.5 Z" fill="#c4c4c4"/></svg>
<div class="a" style="left:1174px;top:517px;width:241px;height:20px;background:#2a2a2a;border-radius:4px;border:1px solid #212121;box-sizing:border-box;"></div>
<svg class="a" style="left:1179px;top:521px;" width="12" height="12" viewBox="0 0 12 12"><circle cx="4.5" cy="4.5" r="3" fill="none" stroke="#a8a8a8" stroke-width="1.3"/><path d="M6.5 6.5 L10 10" stroke="#a8a8a8" stroke-width="1.5"/></svg>
<div class="a" style="left:1394px;top:518px;width:20px;height:18px;background:#353535;border-radius:0 3px 3px 0;border-left:1px solid #1e1e1e;box-sizing:border-box;"></div>
<svg class="a" style="left:1396px;top:519px;" width="17" height="16" viewBox="0 0 17 16"><rect x="1.5" y="8.5" width="5" height="5" fill="none" stroke="#a8a8a8" stroke-width="1.2"/><path d="M3.5 6.5 V2 H14 V12.5 H9 M6 10.5 L12.5 4 M9 4 H12.5 V7.5" fill="none" stroke="#a8a8a8" stroke-width="1.2"/></svg>
<div class="a" style="left:1418px;top:514px;width:1px;height:25px;background:#2a2a2a;"></div>
<div class="a" style="left:1450px;top:514px;width:1px;height:25px;background:#2a2a2a;"></div>
<div class="a" style="left:1483px;top:514px;width:1px;height:25px;background:#2a2a2a;"></div>
<div class="a" style="left:1515px;top:514px;width:1px;height:25px;background:#2a2a2a;"></div>
<svg class="a" style="left:1426px;top:518px;" width="16" height="17" viewBox="0 0 16 17"><rect x="1.2" y="0.5" width="7" height="7" fill="#c4c4c4"/><circle cx="4.3" cy="12" r="4.2" fill="#c4c4c4"/><path d="M9.5 5.5 L14.8 12 H7.5Z" fill="#c4c4c4"/></svg>
<svg class="a" style="left:1459px;top:520px;" width="14" height="13" viewBox="0 0 14 13"><path d="M0.5 7.5 L7 1 H12.8 V6.5 L6.3 13Z" fill="#c4c4c4"/><circle cx="10" cy="3.8" r="1" fill="#3c3c3c"/></svg>
<svg class="a" style="left:1491px;top:519px;" width="15" height="14" viewBox="0 0 15 14"><path d="M7.5 0.5 L9.4 5 L14.3 5.3 L10.5 8.5 L11.8 13.2 L7.5 10.6 L3.2 13.2 L4.5 8.5 L0.7 5.3 L5.6 5Z" fill="#8a8a8a"/></svg>
<svg class="a" style="left:1524px;top:518px;" width="19" height="17" viewBox="0 0 19 17"><path d="M1 9 Q9 0.5 17.5 9 Q9 16 1 9Z" fill="none" stroke="#c4c4c4" stroke-width="1.2"/><path d="M3 16 L15.5 1.5" stroke="#c4c4c4" stroke-width="1.5"/></svg>
<div class="a t" style="top:517.0px;line-height:20px;font-size:15px;color:#c4c4c4;left:1543px;">8</div>
<div class="a" style="left:1118px;top:540px;width:210px;height:453px;background:#383838;"></div>
<div class="a" style="left:1328px;top:540px;width:16px;height:453px;background:#383838;"></div>
<div class="a" style="left:1328px;top:540px;width:1px;height:453px;background:#333333;"></div>
<div class="a" style="left:1118px;top:767px;width:210px;height:20px;background:#4d4d4d;"></div>
<div class="a" style="left:1118px;top:540px;width:207px;height:453px;overflow:hidden;">
<svg class="a" style="left:91.5px;top:-9px;" width="16" height="13" viewBox="0 0 16 13"><path d="M0.5 0.5 H6 L7.3 2.3 H15.2 V12.5 H0.5Z" fill="#c4c4c4"/></svg><div class="a t" style="top:-13.0px;line-height:20px;font-size:15.7px;color:#c8c8c8;left:112.5px;">Gameplay</div><svg class="a" style="left:91.5px;top:11px;" width="16" height="13" viewBox="0 0 16 13"><path d="M0.5 0.5 H6 L7.3 2.3 H15.2 V12.5 H0.5Z" fill="#c4c4c4"/></svg><div class="a t" style="top:7.0px;line-height:20px;font-size:15.7px;color:#c8c8c8;left:112.5px;">UI</div><svg class="a" style="left:41.5px;top:32px;" width="9" height="11" viewBox="0 0 9 11"><path d="M0.5 0 L8.5 5.3 L0.5 10.6Z" fill="#7f7f7f"/></svg><svg class="a" style="left:56.5px;top:31px;" width="16" height="13" viewBox="0 0 16 13"><path d="M0.5 0.5 H6 L7.3 2.3 H15.2 V12.5 H0.5Z" fill="#c4c4c4"/></svg><div class="a t" style="top:27.0px;line-height:20px;font-size:15.7px;color:#c8c8c8;left:77.5px;">Characters</div><svg class="a" style="left:41.5px;top:52px;" width="9" height="11" viewBox="0 0 9 11"><path d="M0.5 0 L8.5 5.3 L0.5 10.6Z" fill="#7f7f7f"/></svg><svg class="a" style="left:56.5px;top:51px;" width="16" height="13" viewBox="0 0 16 13"><path d="M0.5 0.5 H6 L7.3 2.3 H15.2 V12.5 H0.5Z" fill="#c4c4c4"/></svg><div class="a t" style="top:47.0px;line-height:20px;font-size:15.7px;color:#c8c8c8;left:77.5px;">Environments</div><svg class="a" style="left:41.5px;top:72px;" width="9" height="11" viewBox="0 0 9 11"><path d="M0.5 0 L8.5 5.3 L0.5 10.6Z" fill="#7f7f7f"/></svg><svg class="a" style="left:56.5px;top:71px;" width="16" height="13" viewBox="0 0 16 13"><path d="M0.5 0.5 H6 L7.3 2.3 H15.2 V12.5 H0.5Z" fill="#c4c4c4"/></svg><div class="a t" style="top:67.0px;line-height:20px;font-size:15.7px;color:#c8c8c8;left:77.5px;">Fonts</div><svg class="a" style="left:41.5px;top:92px;" width="9" height="11" viewBox="0 0 9 11"><path d="M0.5 0 L8.5 5.3 L0.5 10.6Z" fill="#7f7f7f"/></svg><svg class="a" style="left:56.5px;top:91px;" width="16" height="13" viewBox="0 0 16 13"><path d="M0.5 0.5 H6 L7.3 2.3 H15.2 V12.5 H0.5Z" fill="#c4c4c4"/></svg><div class="a t" style="top:87.0px;line-height:20px;font-size:15.7px;color:#c8c8c8;left:77.5px;">Objects</div><svg class="a" style="left:56.5px;top:111px;" width="16" height="13" viewBox="0 0 16 13"><path d="M0.5 0.5 H6 L7.3 2.3 H15.2 V12.5 H0.5Z" fill="#c4c4c4"/></svg><div class="a t" style="top:107.0px;line-height:20px;font-size:15.7px;color:#c8c8c8;left:77.5px;">Particles</div><svg class="a" style="left:41.5px;top:132px;" width="9" height="11" viewBox="0 0 9 11"><path d="M0.5 0 L8.5 5.3 L0.5 10.6Z" fill="#7f7f7f"/></svg><svg class="a" style="left:56.5px;top:131px;" width="16" height="13" viewBox="0 0 16 13"><path d="M0.5 0.5 H6 L7.3 2.3 H15.2 V12.5 H0.5Z" fill="#c4c4c4"/></svg><div class="a t" style="top:127.0px;line-height:20px;font-size:15.7px;color:#c8c8c8;left:77.5px;">Textures</div><svg class="a" style="left:24.0px;top:152px;" width="9" height="11" viewBox="0 0 9 11"><path d="M0.5 0 L8.5 5.3 L0.5 10.6Z" fill="#7f7f7f"/></svg><svg class="a" style="left:39.0px;top:151px;" width="16" height="13" viewBox="0 0 16 13"><path d="M0.5 0.5 H6 L7.3 2.3 H15.2 V12.5 H0.5Z" fill="#c4c4c4"/></svg><div class="a t" style="top:147.0px;line-height:20px;font-size:15.7px;color:#c8c8c8;left:60.0px;">ExternalModels</div><svg class="a" style="left:39.0px;top:171px;" width="16" height="13" viewBox="0 0 16 13"><path d="M0.5 0.5 H6 L7.3 2.3 H15.2 V12.5 H0.5Z" fill="#c4c4c4"/></svg><div class="a t" style="top:167.0px;line-height:20px;font-size:15.7px;color:#c8c8c8;left:60.0px;">Materials</div><svg class="a" style="left:39.0px;top:191px;" width="16" height="13" viewBox="0 0 16 13"><path d="M0.5 0.5 H6 L7.3 2.3 H15.2 V12.5 H0.5Z" fill="#c4c4c4"/></svg><div class="a t" style="top:187.0px;line-height:20px;font-size:15.7px;color:#c8c8c8;left:60.0px;">Prefabs</div><svg class="a" style="left:39.0px;top:211px;" width="16" height="13" viewBox="0 0 16 13"><path d="M0.5 0.5 H6 L7.3 2.3 H15.2 V12.5 H0.5Z" fill="#c4c4c4"/></svg><div class="a t" style="top:207.0px;line-height:20px;font-size:15.7px;color:#c8c8c8;left:60.0px;">Scenes</div><svg class="a" style="left:39.0px;top:231px;" width="16" height="13" viewBox="0 0 16 13"><path d="M0.5 0.5 H6 L7.3 2.3 H15.2 V12.5 H0.5Z" fill="#c4c4c4"/></svg><div class="a t" style="top:227.0px;line-height:20px;font-size:15.7px;color:#c8c8c8;left:60.0px;">Scripts</div><svg class="a" style="left:23.0px;top:252px;" width="11" height="10" viewBox="0 0 11 10"><path d="M0 0.5 H10.5 L5.25 9Z" fill="#7f7f7f"/></svg><svg class="a" style="left:39.0px;top:250px;" width="18" height="13" viewBox="0 0 18 13"><path d="M0.5 1 H5.5 L7 2.8 H14 V5 H3.5 L0.5 12.5Z" fill="#c4c4c4"/><path d="M3.8 5.8 H17.5 L14.5 12.5 H0.8Z" fill="#c4c4c4"/></svg><div class="a t" style="top:247.0px;line-height:20px;font-size:15.7px;color:#c8c8c8;left:60.0px;">SyntyStudios</div><svg class="a" style="left:40.5px;top:272px;" width="11" height="10" viewBox="0 0 11 10"><path d="M0 0.5 H10.5 L5.25 9Z" fill="#7f7f7f"/></svg><svg class="a" style="left:56.5px;top:270px;" width="18" height="13" viewBox="0 0 18 13"><path d="M0.5 1 H5.5 L7 2.8 H14 V5 H3.5 L0.5 12.5Z" fill="#c4c4c4"/><path d="M3.8 5.8 H17.5 L14.5 12.5 H0.8Z" fill="#c4c4c4"/></svg><div class="a t" style="top:267.0px;line-height:20px;font-size:15.7px;color:#c8c8c8;left:77.5px;">PolygonAdventure</div><svg class="a" style="left:74.0px;top:291px;" width="16" height="13" viewBox="0 0 16 13"><path d="M0.5 0.5 H6 L7.3 2.3 H15.2 V12.5 H0.5Z" fill="#c4c4c4"/></svg><div class="a t" style="top:287.0px;line-height:20px;font-size:15.7px;color:#c8c8c8;left:95.0px;">DemoScene</div><svg class="a" style="left:74.0px;top:311px;" width="16" height="13" viewBox="0 0 16 13"><path d="M0.5 0.5 H6 L7.3 2.3 H15.2 V12.5 H0.5Z" fill="#c4c4c4"/></svg><div class="a t" style="top:307.0px;line-height:20px;font-size:15.7px;color:#c8c8c8;left:95.0px;">Materials</div><svg class="a" style="left:59.0px;top:332px;" width="9" height="11" viewBox="0 0 9 11"><path d="M0.5 0 L8.5 5.3 L0.5 10.6Z" fill="#7f7f7f"/></svg><svg class="a" style="left:74.0px;top:331px;" width="16" height="13" viewBox="0 0 16 13"><path d="M0.5 0.5 H6 L7.3 2.3 H15.2 V12.5 H0.5Z" fill="#c4c4c4"/></svg><div class="a t" style="top:327.0px;line-height:20px;font-size:15.7px;color:#c8c8c8;left:95.0px;">Models</div><svg class="a" style="left:58.0px;top:352px;" width="11" height="10" viewBox="0 0 11 10"><path d="M0 0.5 H10.5 L5.25 9Z" fill="#7f7f7f"/></svg><svg class="a" style="left:74.0px;top:350px;" width="18" height="13" viewBox="0 0 18 13"><path d="M0.5 1 H5.5 L7 2.8 H14 V5 H3.5 L0.5 12.5Z" fill="#c4c4c4"/><path d="M3.8 5.8 H17.5 L14.5 12.5 H0.8Z" fill="#c4c4c4"/></svg><div class="a t" style="top:347.0px;line-height:20px;font-size:15.7px;color:#c8c8c8;left:95.0px;">Prefabs</div><svg class="a" style="left:91.5px;top:371px;" width="16" height="13" viewBox="0 0 16 13"><path d="M0.5 0.5 H6 L7.3 2.3 H15.2 V12.5 H0.5Z" fill="#c4c4c4"/></svg><div class="a t" style="top:367.0px;line-height:20px;font-size:15.7px;color:#c8c8c8;left:112.5px;">Buildings</div><svg class="a" style="left:91.5px;top:391px;" width="16" height="13" viewBox="0 0 16 13"><path d="M0.5 0.5 H6 L7.3 2.3 H15.2 V12.5 H0.5Z" fill="#c4c4c4"/></svg><div class="a t" style="top:387.0px;line-height:20px;font-size:15.7px;color:#c8c8c8;left:112.5px;">Characters</div><svg class="a" style="left:91.5px;top:411px;" width="16" height="13" viewBox="0 0 16 13"><path d="M0.5 0.5 H6 L7.3 2.3 H15.2 V12.5 H0.5Z" fill="#c4c4c4"/></svg><div class="a t" style="top:407.0px;line-height:20px;font-size:15.7px;color:#c8c8c8;left:112.5px;">Environments</div><svg class="a" style="left:91.5px;top:431px;" width="16" height="13" viewBox="0 0 16 13"><path d="M0.5 0.5 H6 L7.3 2.3 H15.2 V12.5 H0.5Z" fill="#c4c4c4"/></svg><div class="a t" style="top:427.0px;line-height:20px;font-size:15.7px;color:#c8c8c8;left:112.5px;">Items</div><svg class="a" style="left:91.5px;top:451px;" width="16" height="13" viewBox="0 0 16 13"><path d="M0.5 0.5 H6 L7.3 2.3 H15.2 V12.5 H0.5Z" fill="#c4c4c4"/></svg><div class="a t" style="top:447.0px;line-height:20px;font-size:15.7px;color:#c8c8c8;left:112.5px;">Props</div>
</div>
<svg class="a" style="left:1332px;top:547px;" width="10" height="6" viewBox="0 0 10 6"><path d="M0 5.5 L4.75 0 L9.5 5.5Z" fill="#c4c4c4"/></svg>
<div class="a" style="left:1331px;top:655px;width:12px;height:146px;background:#5a5a5a;border-radius:6px;"></div>
<svg class="a" style="left:1332px;top:981px;" width="10" height="6" viewBox="0 0 10 6"><path d="M0 0 H9.5 L4.75 5.5Z" fill="#c4c4c4"/></svg>
<div class="a" style="left:1344px;top:540px;width:2px;height:453px;background:#242424;"></div>
<div class="a" style="left:1346px;top:540px;width:212px;height:26px;background:#3c3c3c;"></div>
<div class="a" style="left:1346px;top:566px;width:212px;height:1px;background:#2a2a2a;"></div>
<div class="a t" style="top:542.0px;line-height:21px;font-size:16px;color:#c4c4c4;left:1350px;">Assets</div>
<svg class="a" style="left:1407px;top:546px;" width="7" height="12" viewBox="0 0 7 12"><path d="M1 1 L6 6 L1 11" fill="none" stroke="#8c8c8c" stroke-width="1.4"/></svg>
<div class="a t" style="top:542.5px;line-height:20px;font-size:15.3px;color:#d2d2d2;font-weight:bold;left:1421px;">Scripts</div>
<div class="a" style="left:1346px;top:567px;width:212px;height:401px;background:#333333;"></div>
<svg class="a" style="left:1413px;top:584px;overflow:hidden;" width="60" height="70" viewBox="0 0 60 70"><path d="M4 0 H46 L60 14 V66 Q60 70 56 70 H4 Q0 70 0 66 V4 Q0 0 4 0Z" fill="#ededed"/><path d="M22.5 15 L16.5 58 M38.5 15 L32.5 58 M15 26.5 H46 M12 47 H43" stroke="#267326" stroke-width="6.4" fill="none"/></svg>
<div class="a t" style="top:661.0px;line-height:17px;font-size:13.2px;color:#c8c8c8;left:943px;width:1000px;text-align:center;letter-spacing:0.9px;">FollowPlay...</div>
<svg class="a" style="left:1406px;top:698px;" width="74" height="74" viewBox="0 0 74 74"><defs><linearGradient id="gg" x1="0.1" y1="0.05" x2="0.9" y2="0.95"><stop offset="0" stop-color="#b9bfca"/><stop offset="0.3" stop-color="#e9ebf0"/><stop offset="0.5" stop-color="#8a93a6"/><stop offset="0.7" stop-color="#dfe2e8"/><stop offset="1" stop-color="#9098a8"/></linearGradient></defs><g fill="url(#gg)"><rect x="33.5" y="2" width="7" height="10" rx="1.5" transform="rotate(0.0 37 37)"/><rect x="33.5" y="2" width="7" height="10" rx="1.5" transform="rotate(22.5 37 37)"/><rect x="33.5" y="2" width="7" height="10" rx="1.5" transform="rotate(45.0 37 37)"/><rect x="33.5" y="2" width="7" height="10" rx="1.5" transform="rotate(67.5 37 37)"/><rect x="33.5" y="2" width="7" height="10" rx="1.5" transform="rotate(90.0 37 37)"/><rect x="33.5" y="2" width="7" height="10" rx="1.5" transform="rotate(112.5 37 37)"/><rect x="33.5" y="2" width="7" height="10" rx="1.5" transform="rotate(135.0 37 37)"/><rect x="33.5" y="2" width="7" height="10" rx="1.5" transform="rotate(157.5 37 37)"/><rect x="33.5" y="2" width="7" height="10" rx="1.5" transform="rotate(180.0 37 37)"/><rect x="33.5" y="2" width="7" height="10" rx="1.5" transform="rotate(202.5 37 37)"/><rect x="33.5" y="2" width="7" height="10" rx="1.5" transform="rotate(225.0 37 37)"/><rect x="33.5" y="2" width="7" height="10" rx="1.5" transform="rotate(247.5 37 37)"/><rect x="33.5" y="2" width="7" height="10" rx="1.5" transform="rotate(270.0 37 37)"/><rect x="33.5" y="2" width="7" height="10" rx="1.5" transform="rotate(292.5 37 37)"/><rect x="33.5" y="2" width="7" height="10" rx="1.5" transform="rotate(315.0 37 37)"/><rect x="33.5" y="2" width="7" height="10" rx="1.5" transform="rotate(337.5 37 37)"/><circle cx="37" cy="37" r="30"/></g><circle cx="37" cy="37" r="12.8" fill="#333333"/></svg>
<div class="a t" style="top:777.5px;line-height:17px;font-size:13.2px;color:#c8c8c8;left:943px;width:1000px;text-align:center;letter-spacing:0.9px;">GameMan...</div>
<svg class="a" style="left:1413px;top:818px;overflow:hidden;" width="60" height="70" viewBox="0 0 60 70"><path d="M4 0 H46 L60 14 V66 Q60 70 56 70 H4 Q0 70 0 66 V4 Q0 0 4 0Z" fill="#ededed"/><path d="M22.5 15 L16.5 58 M38.5 15 L32.5 58 M15 26.5 H46 M12 47 H43" stroke="#267326" stroke-width="6.4" fill="none"/></svg>
<div class="a t" style="top:894.0px;line-height:17px;font-size:13.2px;color:#c8c8c8;left:943px;width:1000px;text-align:center;letter-spacing:0.9px;">HoldDagger</div>
<div class="a" style="left:1413px;top:933px;width:60px;height:34px;overflow:hidden;">
<svg class="a" style="left:0px;top:0px;overflow:hidden;" width="60" height="70" viewBox="0 0 60 70"><path d="M4 0 H46 L60 14 V66 Q60 70 56 70 H4 Q0 70 0 66 V4 Q0 0 4 0Z" fill="#ededed"/><path d="M22.5 15 L16.5 58 M38.5 15 L32.5 58 M15 26.5 H46 M12 47 H43" stroke="#267326" stroke-width="6.4" fill="none"/></svg>
</div>
<div class="a" style="left:1542px;top:567px;width:16px;height:401px;background:#303030;"></div>
<svg class="a" style="left:1546px;top:574px;" width="10" height="6" viewBox="0 0 10 6"><path d="M0 5.5 L4.75 0 L9.5 5.5Z" fill="#c4c4c4"/></svg>
<div class="a" style="left:1544px;top:586px;width:13px;height:214px;background:#5a5a5a;border-radius:6.5px;"></div>
<svg class="a" style="left:1546px;top:955px;" width="10" height="6" viewBox="0 0 10 6"><path d="M0 0 H9.5 L4.75 5.5Z" fill="#c4c4c4"/></svg>
<div class="a" style="left:1346px;top:968px;width:212px;height:25px;background:#3a3a3a;border-top:1px solid #262626;box-sizing:border-box;"></div>
<svg class="a" style="left:1352px;top:972px;" width="16" height="16" viewBox="0 0 16 16"><rect x="0.5" y="0.5" width="5.5" height="5.5" fill="#9a9a9a"/><rect x="9.5" y="9.5" width="6" height="6" fill="#d0d0d0"/><path d="M3 6 V12.5 H9.5 M6 3 H12.5 V9.5" fill="none" stroke="#5fd6c0" stroke-width="1.4"/></svg>
<div class="a" style="left:1370px;top:968px;width:98px;height:25px;overflow:hidden;">
<div class="a t" style="top:2.0px;line-height:21px;font-size:16px;color:#c8c8c8;left:0px;">Assets/Course Library</div>
</div>
<div class="a" style="left:1471px;top:979px;width:67px;height:3px;background:#5e5e5e;border-radius:1.5px;"></div>
<div class="a" style="left:1502px;top:974px;width:13px;height:13px;background:#a8a8a8;border-radius:50%;"></div>
<div class="a" style="left:1561px;top:92px;width:359px;height:24px;background:#282828;border-radius:5px 5px 0 0;"></div>
<div class="a" style="left:1561px;top:92px;width:119px;height:24px;background:#3c3c3c;border-radius:5px 5px 0 0;"></div>
<svg class="a" style="left:1572px;top:98px;" width="14" height="14" viewBox="0 0 14 14"><circle cx="7" cy="7" r="6.3" fill="#c4c4c4"/><rect x="6" y="5.8" width="2.2" height="5.2" fill="#3c3c3c"/><circle cx="7.1" cy="3.6" r="1.2" fill="#3c3c3c"/><rect x="5" y="10" width="4.2" height="1.3" fill="#3c3c3c"/></svg>
<div class="a t" style="top:94.5px;line-height:21px;font-size:16.2px;color:#c4c4c4;left:1591px;">Inspector</div>
<svg class="a" style="left:1875px;top:96px;" width="11" height="14" viewBox="0 0 11 14"><path d="M8.6 7.4 V3.6 Q8.6 1.2 6.1 1.2 Q4 1.2 2.9 2.7" fill="none" stroke="#c4c4c4" stroke-width="1.25"/><rect x="0.6" y="7.4" width="9.3" height="5.5" rx="0.9" fill="none" stroke="#c4c4c4" stroke-width="1.2"/></svg>
<svg class="a" style="left:1899px;top:96px;" width="5" height="14" viewBox="0 0 5 14"><circle cx="2.5" cy="2.5" r="1.3" fill="#c4c4c4"/><circle cx="2.5" cy="7" r="1.3" fill="#c4c4c4"/><circle cx="2.5" cy="11.5" r="1.3" fill="#c4c4c4"/></svg>
<div class="a" style="left:1561px;top:116px;width:359px;height:877px;background:#383838;"></div>
<div class="a" style="left:1561px;top:116px;width:359px;height:65px;background:#3e3e3e;"></div>
<div class="a" style="left:1561px;top:181px;width:359px;height:2px;background:#282828;"></div>
<svg class="a" style="left:1575px;top:131px;" width="27" height="27" viewBox="0 0 27 27"><rect x="0.6" y="0.4" width="26" height="8.4" rx="2" fill="#c4c4c4"/><rect x="0.6" y="17.9" width="26" height="8.6" rx="2" fill="#c4c4c4"/><rect x="9.2" y="2.5" width="8.7" height="7" fill="#3e3e3e"/><path d="M11 4.9 H16 V13.5 H19.9 L13.5 21.4 L7.2 13.5 H11Z" fill="#262626" stroke="#262626" stroke-width="3" stroke-linejoin="round"/><path d="M11 4.9 H16 V13.5 H19.9 L13.5 21.4 L7.2 13.5 H11Z" fill="#7ef5de"/></svg>
<div class="a t" style="top:123.8px;line-height:21px;font-size:16px;color:#c8c8c8;left:1617.5px;">Dead_02 -&gt; Alive</div>
<div class="a t" style="top:146.5px;line-height:21px;font-size:16px;color:#c8c8c8;left:1617.5px;">1 AnimatorTransitionBase</div>
<svg class="a" style="left:1864px;top:126px;" width="12" height="12" viewBox="0 0 12 12"><circle cx="6" cy="6" r="6" fill="#c4c4c4"/><path d="M3.9 4.6 Q4 2.5 6 2.5 Q8.2 2.5 8.2 4.4 Q8.2 5.6 6.9 6.2 Q6.1 6.6 6.1 7.6" fill="none" stroke="#3e3e3e" stroke-width="1.5"/><circle cx="6.1" cy="9.5" r="0.9" fill="#3e3e3e"/></svg>
<svg class="a" style="left:1883px;top:125px;" width="14" height="13" viewBox="0 0 14 13"><path d="M0.5 3.5 H13.5 M0.5 9.5 H13.5" stroke="#c4c4c4" stroke-width="1.3"/><rect x="8" y="0.5" width="2" height="6" fill="#c4c4c4"/><rect x="4" y="6.5" width="2" height="6" fill="#c4c4c4"/></svg>
<svg class="a" style="left:1908px;top:125px;" width="5" height="14" viewBox="0 0 5 14"><circle cx="2.5" cy="2.5" r="1.3" fill="#c4c4c4"/><circle cx="2.5" cy="7" r="1.3" fill="#c4c4c4"/><circle cx="2.5" cy="11.5" r="1.3" fill="#c4c4c4"/></svg>
<div class="a" style="left:1566px;top:187px;width:348px;height:62px;background:#3f3f3f;border:1px solid #262626;border-radius:4px;box-sizing:border-box;"></div>
<div class="a" style="left:1567px;top:188px;width:346px;height:22px;background:#353535;border-radius:3px 3px 0 0;"></div>
<div class="a" style="left:1567px;top:210px;width:346px;height:1px;background:#262626;"></div>
<div class="a t" style="top:189.0px;line-height:21px;font-size:16px;color:#c8c8c8;left:1577px;">Transitions</div>
<div class="a t" style="top:189.0px;line-height:21px;font-size:16px;color:#c8c8c8;left:1831px;">Solo</div>
<div class="a" style="left:1870px;top:188px;width:34px;height:22px;overflow:hidden;">
<div class="a t" style="top:1.0px;line-height:21px;font-size:16px;color:#c8c8c8;left:0px;">Mute</div>
</div>
<div class="a" style="left:1567px;top:216px;width:346px;height:30px;background:#4b4b4b;"></div>
<div class="a t" style="top:220.2px;line-height:21px;font-size:16px;color:#c8c8c8;left:1576.5px;">Dead_02 -&gt; Alive</div>
<div class="a" style="left:1829px;top:222px;width:17px;height:18px;background:#2b2b2b;border:1px solid #1f1f1f;border-radius:3px;box-sizing:border-box;"></div>
<div class="a" style="left:1869px;top:222px;width:17px;height:18px;background:#2b2b2b;border:1px solid #1f1f1f;border-radius:3px;box-sizing:border-box;"></div>
<div class="a" style="left:1861px;top:248px;width:40px;height:25px;background:#383838;border:1px solid #262626;border-top:none;border-radius:0 0 4px 4px;box-sizing:border-box;"></div>
<div class="a" style="left:1876px;top:259px;width:10px;height:2px;background:#c4c4c4;"></div>
<div class="a" style="left:1561px;top:279px;width:359px;height:2px;background:#282828;"></div>
<div class="a" style="left:1561px;top:281px;width:359px;height:80px;background:#3c3c3c;"></div>
<div class="a" style="left:1561px;top:361px;width:359px;height:1px;background:#262626;"></div>
<svg class="a" style="left:1575px;top:295px;" width="27" height="27" viewBox="0 0 27 27"><rect x="0.6" y="0.4" width="26" height="8.4" rx="2" fill="#c4c4c4"/><rect x="0.6" y="17.9" width="26" height="8.6" rx="2" fill="#c4c4c4"/><rect x="9.2" y="2.5" width="8.7" height="7" fill="#3c3c3c"/><path d="M11 4.9 H16 V13.5 H19.9 L13.5 21.4 L7.2 13.5 H11Z" fill="#262626" stroke="#262626" stroke-width="3" stroke-linejoin="round"/><path d="M11 4.9 H16 V13.5 H19.9 L13.5 21.4 L7.2 13.5 H11Z" fill="#7ef5de"/></svg>
<div class="a" style="left:1616px;top:287px;width:254px;height:20px;background:#2a2a2a;border:1px solid #222;border-radius:4px;box-sizing:border-box;"></div>
<svg class="a" style="left:1879px;top:290px;" width="12" height="12" viewBox="0 0 12 12"><circle cx="6" cy="6" r="6" fill="#c4c4c4"/><path d="M3.9 4.6 Q4 2.5 6 2.5 Q8.2 2.5 8.2 4.4 Q8.2 5.6 6.9 6.2 Q6.1 6.6 6.1 7.6" fill="none" stroke="#3c3c3c" stroke-width="1.5"/><circle cx="6.1" cy="9.5" r="0.9" fill="#3c3c3c"/></svg>
<svg class="a" style="left:1900px;top:289px;transform:scale(0.875);transform-origin:0 0;" width="16" height="16" viewBox="0 0 16 16"><g fill="#c8c8c8"><rect x="5.9" y="0.6" width="4.2" height="4" rx="0.6" transform="rotate(0 8 8)"/><rect x="5.9" y="0.6" width="4.2" height="4" rx="0.6" transform="rotate(60 8 8)"/><rect x="5.9" y="0.6" width="4.2" height="4" rx="0.6" transform="rotate(120 8 8)"/><rect x="5.9" y="0.6" width="4.2" height="4" rx="0.6" transform="rotate(180 8 8)"/><rect x="5.9" y="0.6" width="4.2" height="4" rx="0.6" transform="rotate(240 8 8)"/><rect x="5.9" y="0.6" width="4.2" height="4" rx="0.6" transform="rotate(300 8 8)"/><circle cx="8" cy="8" r="5.7"/></g><circle cx="8" cy="8" r="2.7" fill="#3c3c3c"/></svg>
<div class="a t" style="top:329.3px;line-height:21px;font-size:16.2px;color:#c8c8c8;left:1622.5px;">Dead_02 -&gt; Alive</div>
<div class="a t" style="top:366.6px;line-height:20px;font-size:15.7px;color:#c8c8c8;left:1566.5px;">Has Exit Time</div>
<div class="a" style="left:1717px;top:367px;width:17px;height:18px;background:#2b2b2b;border:1px solid #1f1f1f;border-radius:3px;box-sizing:border-box;"></div>
<svg class="a" style="left:1719px;top:370px;" width="13" height="12" viewBox="0 0 13 12"><path d="M2 6.5 L5 9.5 L11 2.5" fill="none" stroke="#e8e8e8" stroke-width="2"/></svg>
<svg class="a" style="left:1566px;top:396px;" width="9" height="11" viewBox="0 0 9 11"><path d="M0.5 0 L8 5.3 L0.5 10.6Z" fill="#7f7f7f"/></svg>
<div class="a t" style="top:391.3px;line-height:21px;font-size:16px;color:#c8c8c8;left:1578.5px;">Settings</div>
<div class="a" style="left:1565px;top:415px;width:351px;height:187px;background:#2a2a2a;border:1px solid #2e2e2e;box-sizing:border-box;"></div>
<div class="a" style="left:1565px;top:415px;width:351px;height:23px;background:#353535;"></div>
<div class="a" style="left:1565px;top:438px;width:351px;height:82px;background:#2e2e2e;background:linear-gradient(180deg,#222 0,#2c2c2c 6px,#2d2d2d 100%);"></div>
<div class="a" style="left:1565px;top:520px;width:351px;height:82px;background:#262626;background:linear-gradient(180deg,#1f1f1f 0,#262626 8px,#262626 100%);"></div>
<div class="a" style="left:1577px;top:415px;width:64px;height:23px;background:#3d6291;"></div>
<div class="a" style="left:1577px;top:438px;width:64px;height:164px;background:rgba(70,100,150,0.22);"></div>
<svg class="a" style="left:1565px;top:415px;" width="351" height="187" viewBox="0 0 351 187"><line x1="12.3" y1="23" x2="12.3" y2="187" stroke="#3a3a3a" stroke-width="1"/><line x1="12.3" y1="9" x2="12.3" y2="22" stroke="#c8c8c8" stroke-width="1.6"/><line x1="55.1" y1="23" x2="55.1" y2="187" stroke="#3a3a3a" stroke-width="1"/><line x1="55.1" y1="14" x2="55.1" y2="22" stroke="#c8c8c8" stroke-width="1.4"/><line x1="98.0" y1="23" x2="98.0" y2="187" stroke="#3a3a3a" stroke-width="1"/><line x1="98.0" y1="9" x2="98.0" y2="22" stroke="#c8c8c8" stroke-width="1.6"/><line x1="140.8" y1="23" x2="140.8" y2="187" stroke="#3a3a3a" stroke-width="1"/><line x1="140.8" y1="14" x2="140.8" y2="22" stroke="#c8c8c8" stroke-width="1.4"/><line x1="183.7" y1="23" x2="183.7" y2="187" stroke="#3a3a3a" stroke-width="1"/><line x1="183.7" y1="9" x2="183.7" y2="22" stroke="#c8c8c8" stroke-width="1.6"/><line x1="226.5" y1="23" x2="226.5" y2="187" stroke="#3a3a3a" stroke-width="1"/><line x1="226.5" y1="14" x2="226.5" y2="22" stroke="#c8c8c8" stroke-width="1.4"/><line x1="269.4" y1="23" x2="269.4" y2="187" stroke="#3a3a3a" stroke-width="1"/><line x1="269.4" y1="9" x2="269.4" y2="22" stroke="#c8c8c8" stroke-width="1.6"/><line x1="312.2" y1="23" x2="312.2" y2="187" stroke="#3a3a3a" stroke-width="1"/><line x1="312.2" y1="14" x2="312.2" y2="22" stroke="#c8c8c8" stroke-width="1.4"/><rect x="20.4" y="20" width="1" height="1.5" fill="#888"/><rect x="28.9" y="20" width="1" height="1.5" fill="#888"/><rect x="37.5" y="20" width="1" height="1.5" fill="#888"/><rect x="46.1" y="20" width="1" height="1.5" fill="#888"/><rect x="63.2" y="20" width="1" height="1.5" fill="#888"/><rect x="71.8" y="20" width="1" height="1.5" fill="#888"/><rect x="80.4" y="20" width="1" height="1.5" fill="#888"/><rect x="88.9" y="20" width="1" height="1.5" fill="#888"/><rect x="106.1" y="20" width="1" height="1.5" fill="#888"/><rect x="114.6" y="20" width="1" height="1.5" fill="#888"/><rect x="123.2" y="20" width="1" height="1.5" fill="#888"/><rect x="131.8" y="20" width="1" height="1.5" fill="#888"/><rect x="148.9" y="20" width="1" height="1.5" fill="#888"/><rect x="157.5" y="20" width="1" height="1.5" fill="#888"/><rect x="166.1" y="20" width="1" height="1.5" fill="#888"/><rect x="174.6" y="20" width="1" height="1.5" fill="#888"/><rect x="191.8" y="20" width="1" height="1.5" fill="#888"/><rect x="200.3" y="20" width="1" height="1.5" fill="#888"/><rect x="208.9" y="20" width="1" height="1.5" fill="#888"/><rect x="217.5" y="20" width="1" height="1.5" fill="#888"/><rect x="234.6" y="20" width="1" height="1.5" fill="#888"/><rect x="243.2" y="20" width="1" height="1.5" fill="#888"/><rect x="251.8" y="20" width="1" height="1.5" fill="#888"/><rect x="260.3" y="20" width="1" height="1.5" fill="#888"/><rect x="277.5" y="20" width="1" height="1.5" fill="#888"/><rect x="286.0" y="20" width="1" height="1.5" fill="#888"/><rect x="294.6" y="20" width="1" height="1.5" fill="#888"/><rect x="303.2" y="20" width="1" height="1.5" fill="#888"/><rect x="320.3" y="20" width="1" height="1.5" fill="#888"/><rect x="328.9" y="20" width="1" height="1.5" fill="#888"/><rect x="337.5" y="20" width="1" height="1.5" fill="#888"/><rect x="346.0" y="20" width="1" height="1.5" fill="#888"/></svg>
<div class="a t" style="top:420.5px;line-height:16px;font-size:12px;color:#c4c4c4;left:1584px;">0:00</div>
<div class="a t" style="top:420.5px;line-height:16px;font-size:12px;color:#c4c4c4;left:1666.5px;">0:10</div>
<div class="a t" style="top:420.5px;line-height:16px;font-size:12px;color:#c4c4c4;left:1752.5px;">0:20</div>
<div class="a t" style="top:420.5px;line-height:16px;font-size:12px;color:#c4c4c4;left:1837.5px;">1:00</div>
<svg class="a" style="left:1567px;top:420px;" width="22" height="20" viewBox="0 0 22 20"><path d="M2 1 H4.5 V16 H2Z" fill="#2a6fd6"/><path d="M4 2 Q4 0.5 6 0.5 H18 Q20 0.5 20 2.5 V9 L12 17 L4 9Z" fill="#3d8cf0" stroke="#0d1a33" stroke-width="1"/><path d="M6 3 H18 V7 H6Z" fill="#7fb6ff" opacity="0.6"/></svg>
<svg class="a" style="left:1643px;top:421px;" width="11" height="15" viewBox="0 0 11 15"><path d="M1 0.5 H2.8 V14.5 H1Z" fill="#4a90f0"/><path d="M10.5 1 V14 L3.5 7.5Z" fill="#3d8cf0" stroke="#0d1a33" stroke-width="0.8"/></svg>
<div class="a" style="left:1577px;top:438px;width:1.2px;height:164px;background:#bdbdbd;"></div>
<div class="a" style="left:1578px;top:472px;width:256.5px;height:2px;background:#c8c8c8;"></div>
<div class="a" style="left:1578px;top:562px;width:256px;height:40px;background:linear-gradient(180deg,#4c72a6 0%,#3f5f8d 50%,#34507a 100%);border:1px solid #101010;box-sizing:border-box;"></div>
<svg class="a" style="left:1578px;top:562px;" width="64" height="40" viewBox="0 0 64 40"><path d="M1 1 L63 39 H1Z" fill="#4a4a4a" opacity="0.85"/></svg>
<div class="a" style="left:1641px;top:562px;width:1px;height:40px;background:#101010;"></div>
<div class="a t" style="top:571.5px;line-height:20px;font-size:15.5px;color:#a8a8a8;left:1582px;">Alive</div>
<div class="a" style="left:1567px;top:618px;width:347px;height:63px;background:#383838;border:1px solid #262626;border-radius:4px;box-sizing:border-box;"></div>
<div class="a" style="left:1568px;top:619px;width:345px;height:22px;background:#353535;border-radius:3px 3px 0 0;"></div>
<div class="a" style="left:1568px;top:641px;width:345px;height:1px;background:#262626;"></div>
<div class="a t" style="top:619.5px;line-height:21px;font-size:16px;color:#c8c8c8;left:1576px;">Conditions</div>
<svg class="a" style="left:1573px;top:657px;" width="13" height="6" viewBox="0 0 13 6"><path d="M0 0.5 H12 M0 4.5 H12" stroke="#5c5c5c" stroke-width="1"/></svg>
<div class="a" style="left:1593px;top:651px;width:151px;height:22px;background:#515151;border:1px solid #262626;border-radius:3px;box-sizing:border-box;"></div>
<div class="a t" style="top:651.0px;line-height:21px;font-size:16px;color:#d0d0d0;left:1597.5px;">Death_b</div>
<svg class="a" style="left:1728px;top:658px;" width="10" height="7" viewBox="0 0 10 7"><path d="M0 0 H9.5 L4.75 6 Z" fill="#c4c4c4"/></svg>
<div class="a" style="left:1753px;top:651px;width:152px;height:22px;background:#515151;border:1px solid #262626;border-radius:3px;box-sizing:border-box;"></div>
<div class="a t" style="top:651.0px;line-height:21px;font-size:16px;color:#d0d0d0;left:1758px;">false</div>
<svg class="a" style="left:1889px;top:658px;" width="10" height="7" viewBox="0 0 10 7"><path d="M0 0 H9.5 L4.75 6 Z" fill="#c4c4c4"/></svg>
<div class="a" style="left:1831px;top:680px;width:70px;height:25px;background:#383838;border:1px solid #262626;border-top:none;border-radius:0 0 4px 4px;box-sizing:border-box;"></div>
<svg class="a" style="left:1844px;top:685px;" width="13" height="13" viewBox="0 0 13 13"><path d="M6.5 0.5 V12.5 M0.5 6.5 H12.5" stroke="#c4c4c4" stroke-width="1.8"/></svg>
<div class="a" style="left:1876px;top:690px;width:10px;height:2px;background:#c4c4c4;"></div>
<div class="a" style="left:1561px;top:777px;width:359px;height:1px;background:#242424;"></div>
<div class="a" style="left:1561px;top:778px;width:359px;height:26px;background:#3c3c3c;"></div>
<div class="a t" style="top:781.6px;line-height:20px;font-size:15.6px;color:#c8c8c8;font-weight:bold;left:1570.3px;">Preview</div>
<div class="a" style="left:1636px;top:789px;width:151px;height:1px;background:#5a5a5a;"></div>
<div class="a" style="left:1636px;top:793px;width:151px;height:1px;background:#5a5a5a;"></div>
<div class="a" style="left:1790px;top:778px;width:1px;height:26px;background:#2a2a2a;"></div>
<div class="a" style="left:1822px;top:778px;width:1px;height:26px;background:#2a2a2a;"></div>
<div class="a" style="left:1898px;top:778px;width:1px;height:26px;background:#2a2a2a;"></div>
<div class="a t" style="top:781.0px;line-height:20px;font-size:15px;color:#c8c8c8;font-weight:bold;left:1798px;">2D</div>
<div class="a" style="left:1823px;top:778px;width:32px;height:26px;background:#4f4f4f;"></div>
<svg class="a" style="left:1829px;top:782px;" width="19" height="17" viewBox="0 0 19 17"><path d="M8 15.5 V2 M5.5 4.5 L8 1.2 L10.5 4.5 M8 9.5 H17.5 M15 7 L18 9.5 L15 12 M8 9.5 L2 15.5 M1.5 12.5 V16 H5" fill="none" stroke="#c4c4c4" stroke-width="1.3"/></svg>
<svg class="a" style="left:1860px;top:782px;" width="20" height="17" viewBox="0 0 20 17"><circle cx="9.5" cy="2.5" r="2.2" fill="#5ee6cf"/><path d="M1 6.5 Q9.5 3.5 18 6.5 L17 8 Q13.5 6.5 12.5 7 V11.5 L11.8 16.5 H10.2 L9.5 12.2 L8.8 16.5 H7.2 L6.5 11.5 V7 Q5.5 6.5 2 8Z" fill="#5ee6cf"/></svg>
<svg class="a" style="left:1884px;top:787px;" width="10" height="7" viewBox="0 0 10 7"><path d="M0 0 H9.5 L4.75 6 Z" fill="#c4c4c4"/></svg>
<svg class="a" style="left:1907px;top:784px;" width="5" height="14" viewBox="0 0 5 14"><circle cx="2.5" cy="2.5" r="1.3" fill="#c4c4c4"/><circle cx="2.5" cy="7" r="1.3" fill="#c4c4c4"/><circle cx="2.5" cy="11.5" r="1.3" fill="#c4c4c4"/></svg>
<div class="a" style="left:1561px;top:803px;width:359px;height:1px;background:#242424;"></div>
<div class="a" style="left:1561px;top:804px;width:170px;height:27px;background:#363636;"></div>
<div class="a" style="left:1731px;top:804px;width:1px;height:27px;background:#262626;"></div>
<div class="a" style="left:1732px;top:804px;width:188px;height:27px;background:#3a3a3a;"></div>
<svg class="a" style="left:1574px;top:811px;" width="12" height="13" viewBox="0 0 12 13"><path d="M0.5 0.5 L11.5 6.5 L0.5 12.5Z" fill="#c4c4c4"/></svg>
<div class="a" style="left:1601px;top:805px;width:2px;height:26px;background:#bdbdbd;"></div>
<div class="a" style="left:1737px;top:816px;width:129px;height:3px;background:#5e5e5e;border-radius:1.5px;"></div>
<div class="a" style="left:1792.5px;top:811px;width:12.5px;height:12.5px;background:#a8a8a8;border-radius:50%;"></div>
<div class="a t" style="top:807.3px;line-height:20px;font-size:15.4px;color:#c8c8c8;left:1869px;">1.00x</div>
<svg class="a" style="left:1561px;top:831px;overflow:hidden;" width="359" height="125" viewBox="0 0 359 125"><rect width="359" height="125" fill="#3a3a3a"/><path d="M364.0 -4.9L363.4 -5.0M364.0 -4.7L362.0 -5.0M364.0 -4.5L360.6 -5.0M364.0 -4.2L359.1 -5.0M364.0 -4.0L357.7 -5.0M364.0 -3.4L354.8 -5.0M364.0 -3.1L353.3 -5.0M364.0 -2.7L351.9 -5.0M364.0 -2.4L350.4 -5.0M364.0 -2.0L349.0 -5.0M364.0 -1.6L355.8 -3.3M355.8 -3.3L347.5 -5.0M364.0 -1.1L355.0 -3.1M355.0 -3.1L346.1 -5.0M364.0 -0.6L354.3 -2.8M354.3 -2.8L344.6 -5.0M364.0 -0.1L353.6 -2.6M353.6 -2.6L343.2 -5.0M364.0 1.1L352.1 -2.0M352.1 -2.0L340.2 -5.0M364.0 1.8L351.4 -1.6M351.4 -1.6L338.8 -5.0M364.0 2.6L350.6 -1.2M350.6 -1.2L337.3 -5.0M364.0 3.4L349.9 -0.8M349.9 -0.8L335.8 -5.0M364.0 4.4L349.2 -0.3M349.2 -0.3L334.3 -5.0M364.0 5.4L356.2 2.8M356.2 2.8L348.4 0.2M348.4 0.2L340.7 -2.4M340.7 -2.4L332.9 -5.0M355.8 3.7L347.7 0.8M347.7 0.8L339.5 -2.1M339.5 -2.1L331.4 -5.0M355.5 4.8L347.0 1.5M347.0 1.5L338.4 -1.7M338.4 -1.7L329.9 -5.0M346.2 2.3L337.3 -1.3M337.3 -1.3L328.4 -5.0M335.1 -0.3L325.5 -5.0M334.0 0.3L324.0 -5.0M332.9 1.2L322.5 -5.0M245.9 10.7L287.7 -5.0M244.5 9.5L286.1 -5.0M243.2 8.6L284.6 -5.0M241.9 7.7L283.0 -5.0M239.2 6.2L280.0 -5.0M237.9 5.6L278.4 -5.0M196.3 15.0L236.6 5.0M236.6 5.0L276.9 -5.0M87.2 26.2L-5.0 14.7M195.2 14.0L235.3 4.5M235.3 4.5L275.3 -5.0M87.2 25.0L-5.0 13.8M194.1 13.1L233.9 4.0M233.9 4.0L273.7 -5.0M87.2 23.9L-5.0 13.0M193.0 12.2L232.6 3.6M232.6 3.6L272.2 -5.0M87.2 22.8L-5.0 12.2M191.9 11.4L231.2 3.2M231.2 3.2L270.6 -5.0M179.5 32.1L87.2 21.8M87.2 21.8L-5.0 11.5M151.6 18.5L190.8 10.7M190.8 10.7L229.9 2.8M229.9 2.8L269.1 -5.0M179.5 30.9L87.2 20.9M87.2 20.9L-5.0 10.8M150.7 17.5L189.6 10.0M189.6 10.0L228.6 2.5M228.6 2.5L267.5 -5.0M179.5 29.7L87.2 20.0M87.2 20.0L-5.0 10.2M148.9 15.7L187.4 8.8M187.4 8.8L225.9 1.9M225.9 1.9L264.4 -5.0M179.5 27.6L87.2 18.3M87.2 18.3L-5.0 9.0M109.8 21.5L148.0 14.9M148.0 14.9L186.3 8.2M186.3 8.2L224.5 1.6M224.5 1.6L262.8 -5.0M271.8 35.7L179.5 26.6M179.5 26.6L87.2 17.5M87.2 17.5L-5.0 8.4M109.1 20.5L147.1 14.1M147.1 14.1L185.2 7.7M185.2 7.7L223.2 1.4M223.2 1.4L261.2 -5.0M271.8 34.5L179.5 25.6M179.5 25.6L87.2 16.8M87.2 16.8L-5.0 7.9M108.4 19.5L146.2 13.4M146.2 13.4L184.0 7.3M184.0 7.3L221.8 1.1M221.8 1.1L259.6 -5.0M271.8 33.4L179.5 24.7M179.5 24.7L87.2 16.1M87.2 16.1L-5.0 7.4M70.2 24.5L107.7 18.6M107.7 18.6L145.3 12.7M145.3 12.7L182.9 6.8M182.9 6.8L220.5 0.9M220.5 0.9L258.1 -5.0M364.0 40.9L271.8 32.4M271.8 32.4L179.5 23.9M179.5 23.9L87.2 15.4M87.2 15.4L-5.0 6.9M69.7 23.4L107.1 17.8M107.1 17.8L144.4 12.1M144.4 12.1L181.8 6.4M181.8 6.4L219.1 0.7M219.1 0.7L256.5 -5.0M364.0 39.7L271.8 31.4M271.8 31.4L179.5 23.1M179.5 23.1L87.2 14.8M87.2 14.8L-5.0 6.4M32.1 27.9L69.3 22.4M69.3 22.4L106.4 17.0M106.4 17.0L143.5 11.5M143.5 11.5L180.6 6.0M180.6 6.0L217.8 0.5M217.8 0.5L254.9 -5.0M364.0 38.6L271.8 30.4M271.8 30.4L179.5 22.3M179.5 22.3L87.2 14.1M87.2 14.1L-5.0 6.0M31.9 26.8L68.8 21.5M68.8 21.5L105.7 16.2M105.7 16.2L142.6 10.9M142.6 10.9L179.5 5.6M179.5 5.6L216.4 0.3M216.4 0.3L253.3 -5.0M364.0 37.5L271.8 29.5M271.8 29.5L179.5 21.5M179.5 21.5L87.2 13.5M87.2 13.5L-5.0 5.6M31.7 25.7L68.3 20.6M68.3 20.6L105.0 15.5M105.0 15.5L141.7 10.4M141.7 10.4L178.4 5.2M178.4 5.2L215.0 0.1M215.0 0.1L251.7 -5.0M364.0 36.4L271.8 28.6M271.8 28.6L179.5 20.8M179.5 20.8L87.2 13.0M87.2 13.0L-5.0 5.2M-5.0 28.6L31.2 23.8M31.2 23.8L67.4 19.0M67.4 19.0L103.7 14.2M103.7 14.2L139.9 9.4M139.9 9.4L176.1 4.6M176.1 4.6L212.3 -0.2M212.3 -0.2L248.5 -5.0M364.0 34.5L271.8 27.0M271.8 27.0L179.5 19.4M179.5 19.4L87.2 11.9M87.2 11.9L-5.0 4.4M-5.0 27.5L31.0 22.8M31.0 22.8L67.0 18.2M67.0 18.2L103.0 13.6M103.0 13.6L139.0 8.9M139.0 8.9L175.0 4.3M175.0 4.3L211.0 -0.4M211.0 -0.4L246.9 -5.0M364.0 33.6L271.8 26.2M271.8 26.2L179.5 18.8M179.5 18.8L87.2 11.4M87.2 11.4L-5.0 4.0M-5.0 26.5L57.6 18.6M57.6 18.6L120.2 10.7M120.2 10.7L182.8 2.9M182.8 2.9L245.4 -5.0M364.0 32.7L271.8 25.4M271.8 25.4L179.5 18.2M179.5 18.2L87.2 10.9M87.2 10.9L-5.0 3.7M-5.0 25.5L57.2 17.9M57.2 17.9L119.4 10.3M119.4 10.3L181.6 2.6M181.6 2.6L243.8 -5.0M364.0 31.8L271.8 24.7M271.8 24.7L179.5 17.6M179.5 17.6L87.2 10.5M87.2 10.5L-5.0 3.4M-5.0 24.6L56.8 17.2M56.8 17.2L118.6 9.8M118.6 9.8L180.4 2.4M180.4 2.4L242.2 -5.0M364.0 31.0L271.8 24.0M271.8 24.0L179.5 17.0M179.5 17.0L87.2 10.0M87.2 10.0L-5.0 3.0M-5.0 23.7L56.4 16.5M56.4 16.5L117.8 9.3M117.8 9.3L179.2 2.2M179.2 2.2L240.6 -5.0M364.0 30.2L271.8 23.3M271.8 23.3L179.5 16.5M179.5 16.5L87.2 9.6M87.2 9.6L-5.0 2.7M-5.0 22.9L56.0 15.9M56.0 15.9L117.0 8.9M117.0 8.9L178.0 2.0M178.0 2.0L238.9 -5.0M364.0 29.5L271.8 22.7M271.8 22.7L179.5 15.9M179.5 15.9L87.2 9.2M87.2 9.2L-5.0 2.4M-5.0 22.1L55.6 15.3M55.6 15.3L116.2 8.5M116.2 8.5L176.8 1.8M176.8 1.8L237.3 -5.0M364.0 28.7L271.8 22.1M271.8 22.1L179.5 15.4M179.5 15.4L87.2 8.8M87.2 8.8L-5.0 2.1M-5.0 21.3L55.2 14.7M55.2 14.7L115.4 8.1M115.4 8.1L175.5 1.6M175.5 1.6L235.7 -5.0M364.0 28.0L271.8 21.5M271.8 21.5L179.5 14.9M179.5 14.9L87.2 8.4M87.2 8.4L-5.0 1.9M-5.0 19.8L54.4 13.6M54.4 13.6L113.8 7.4M113.8 7.4L173.1 1.2M173.1 1.2L232.5 -5.0M364.0 26.7L271.8 20.3M271.8 20.3L179.5 14.0M179.5 14.0L87.2 7.7M87.2 7.7L-5.0 1.3M-5.0 19.2L54.0 13.1M54.0 13.1L112.9 7.1M112.9 7.1L171.9 1.0M171.9 1.0L230.9 -5.0M364.0 26.0L271.8 19.8M271.8 19.8L179.5 13.6M179.5 13.6L87.2 7.3M87.2 7.3L-5.0 1.1M-5.0 18.5L53.6 12.6M53.6 12.6L112.1 6.8M112.1 6.8L170.7 0.9M170.7 0.9L229.3 -5.0M364.0 25.4L271.8 19.3M271.8 19.3L179.5 13.1M179.5 13.1L87.2 7.0M87.2 7.0L-5.0 0.8M-5.0 17.9L53.2 12.2M53.2 12.2L111.3 6.4M111.3 6.4L169.5 0.7M169.5 0.7L227.7 -5.0M364.0 24.8L271.8 18.7M271.8 18.7L179.5 12.7M179.5 12.7L87.2 6.7M87.2 6.7L-5.0 0.6M-5.0 17.3L52.8 11.7M52.8 11.7L110.5 6.1M110.5 6.1L168.3 0.6M168.3 0.6L226.0 -5.0M364.0 24.2L271.8 18.3M271.8 18.3L179.5 12.3M179.5 12.3L87.2 6.3M87.2 6.3L-5.0 0.4M-5.0 16.7L52.4 11.3M52.4 11.3L109.7 5.8M109.7 5.8L167.1 0.4M167.1 0.4L224.4 -5.0M364.0 23.6L271.8 17.8M271.8 17.8L179.5 11.9M179.5 11.9L87.2 6.0M87.2 6.0L-5.0 0.2M-5.0 16.1L51.9 10.8M51.9 10.8L108.9 5.6M108.9 5.6L165.8 0.3M165.8 0.3L222.8 -5.0M364.0 23.1L271.8 17.3M271.8 17.3L179.5 11.5M179.5 11.5L87.2 5.7M87.2 5.7L-5.0 -0.1M-5.0 15.6L51.5 10.4M51.5 10.4L108.1 5.3M108.1 5.3L164.6 0.1M164.6 0.1L221.1 -5.0M364.0 22.6L271.8 16.9M271.8 16.9L179.5 11.1M179.5 11.1L87.2 5.4M87.2 5.4L-5.0 -0.3M-5.0 15.1L51.1 10.1M51.1 10.1L107.3 5.0M107.3 5.0L163.4 0.0M163.4 0.0L219.5 -5.0M364.0 22.0L271.8 16.4M271.8 16.4L179.5 10.8M179.5 10.8L87.2 5.2M87.2 5.2L-5.0 -0.5M-5.0 14.1L50.3 9.3M50.3 9.3L105.6 4.5M105.6 4.5L160.9 -0.2M160.9 -0.2L216.2 -5.0M364.0 21.1L271.8 15.6M271.8 15.6L179.5 10.1M179.5 10.1L87.2 4.6M87.2 4.6L-5.0 -0.9M-5.0 13.6L49.9 9.0M49.9 9.0L104.8 4.3M104.8 4.3L159.7 -0.3M159.7 -0.3L214.6 -5.0M364.0 20.6L271.8 15.2M271.8 15.2L179.5 9.8M179.5 9.8L87.2 4.4M87.2 4.4L-5.0 -1.0M-5.0 13.2L49.5 8.6M49.5 8.6L104.0 4.1M104.0 4.1L158.5 -0.5M158.5 -0.5L213.0 -5.0M364.0 20.1L271.8 14.8M271.8 14.8L179.5 9.4M179.5 9.4L87.2 4.1M87.2 4.1L-5.0 -1.2M-5.0 12.7L49.1 8.3M49.1 8.3L103.2 3.9M103.2 3.9L157.2 -0.6M157.2 -0.6L211.3 -5.0M364.0 19.7L271.8 14.4M271.8 14.4L179.5 9.1M179.5 9.1L87.2 3.9M87.2 3.9L-5.0 -1.4M-5.0 12.3L48.7 8.0M48.7 8.0L102.3 3.6M102.3 3.6L156.0 -0.7M156.0 -0.7L209.7 -5.0M364.0 19.2L271.8 14.0M271.8 14.0L179.5 8.8M179.5 8.8L87.2 3.6M87.2 3.6L-5.0 -1.6M-5.0 11.9L48.3 7.7M48.3 7.7L101.5 3.4M101.5 3.4L154.8 -0.8M154.8 -0.8L208.0 -5.0M364.0 18.8L271.8 13.7M271.8 13.7L179.5 8.5M179.5 8.5L87.2 3.4M87.2 3.4L-5.0 -1.7M-5.0 11.5L47.8 7.4M47.8 7.4L100.7 3.2M100.7 3.2L153.5 -0.9M153.5 -0.9L206.4 -5.0M364.0 18.4L271.8 13.3M271.8 13.3L179.5 8.2M179.5 8.2L87.2 3.2M87.2 3.2L-5.0 -1.9M-5.0 11.1L47.4 7.1M47.4 7.1L99.9 3.0M99.9 3.0L152.3 -1.0M152.3 -1.0L204.7 -5.0M364.0 18.0L271.8 13.0M271.8 13.0L179.5 8.0M179.5 8.0L87.2 3.0M87.2 3.0L-5.0 -2.1M-5.0 10.7L47.0 6.8M47.0 6.8L99.0 2.9M99.0 2.9L151.0 -1.1M151.0 -1.1L203.1 -5.0M364.0 17.6L271.8 12.7M271.8 12.7L179.5 7.7M179.5 7.7L87.2 2.7M87.2 2.7L-5.0 -2.2M-5.0 10.0L46.2 6.2M46.2 6.2L97.4 2.5M97.4 2.5L148.6 -1.3M148.6 -1.3L199.7 -5.0M364.0 16.8L271.8 12.0M271.8 12.0L179.5 7.2M179.5 7.2L87.2 2.3M87.2 2.3L-5.0 -2.5M-5.0 9.6L45.8 6.0M45.8 6.0L96.5 2.3M96.5 2.3L147.3 -1.3M147.3 -1.3L198.1 -5.0M364.0 16.5L271.8 11.7M271.8 11.7L179.5 6.9M179.5 6.9L87.2 2.1M87.2 2.1L-5.0 -2.7M-5.0 9.3L45.4 5.7M45.4 5.7L95.7 2.2M95.7 2.2L146.1 -1.4M146.1 -1.4L196.4 -5.0M364.0 16.1L271.8 11.4M271.8 11.4L179.5 6.7M179.5 6.7L87.2 1.9M87.2 1.9L-5.0 -2.8M-5.0 9.0L44.9 5.5M44.9 5.5L94.9 2.0M94.9 2.0L144.8 -1.5M144.8 -1.5L194.7 -5.0M364.0 15.8L271.8 11.1M271.8 11.1L179.5 6.4M179.5 6.4L87.2 1.7M87.2 1.7L-5.0 -2.9M-5.0 8.7L44.5 5.3M44.5 5.3L94.0 1.8M94.0 1.8L143.6 -1.6M143.6 -1.6L193.1 -5.0M364.0 15.4L271.8 10.8M271.8 10.8L179.5 6.2M179.5 6.2L87.2 1.6M87.2 1.6L-5.0 -3.1M-5.0 8.4L44.1 5.0M44.1 5.0L93.2 1.7M93.2 1.7L142.3 -1.7M142.3 -1.7L191.4 -5.0M364.0 15.1L271.8 10.5M271.8 10.5L179.5 6.0M179.5 6.0L87.2 1.4M87.2 1.4L-5.0 -3.2M-5.0 8.1L43.7 4.8M43.7 4.8L92.4 1.5M92.4 1.5L141.0 -1.7M141.0 -1.7L189.7 -5.0M364.0 14.8L271.8 10.3M271.8 10.3L179.5 5.7M179.5 5.7L87.2 1.2M87.2 1.2L-5.0 -3.3M-5.0 7.8L43.3 4.6M43.3 4.6L91.5 1.4M91.5 1.4L139.8 -1.8M139.8 -1.8L188.1 -5.0M364.0 14.5L271.8 10.0M271.8 10.0L179.5 5.5M179.5 5.5L87.2 1.0M87.2 1.0L-5.0 -3.4M-5.0 7.5L42.8 4.4M42.8 4.4L90.7 1.2M90.7 1.2L138.5 -1.9M138.5 -1.9L186.4 -5.0M364.0 14.2L271.8 9.7M271.8 9.7L179.5 5.3M179.5 5.3L87.2 0.9M87.2 0.9L-5.0 -3.6M-5.0 6.9L42.0 4.0M42.0 4.0L89.0 1.0M89.0 1.0L136.0 -2.0M136.0 -2.0L183.0 -5.0M364.0 13.6L271.8 9.2M271.8 9.2L179.5 4.9M179.5 4.9L87.2 0.5M87.2 0.5L-5.0 -3.8M-5.0 6.7L41.6 3.8M41.6 3.8L88.2 0.8M88.2 0.8L134.7 -2.1M134.7 -2.1L181.3 -5.0M364.0 13.3L271.8 9.0M271.8 9.0L179.5 4.7M179.5 4.7L87.2 0.4M87.2 0.4L-5.0 -3.9M-5.0 6.4L41.2 3.6M41.2 3.6L87.3 0.7M87.3 0.7L133.5 -2.1M133.5 -2.1L179.6 -5.0M364.0 13.0L271.8 8.7M271.8 8.7L179.5 4.5M179.5 4.5L87.2 0.2M87.2 0.2L-5.0 -4.0M-5.0 6.2L40.7 3.4M40.7 3.4L86.5 0.6M86.5 0.6L132.2 -2.2M132.2 -2.2L177.9 -5.0M364.0 12.7L271.8 8.5M271.8 8.5L179.5 4.3M179.5 4.3L87.2 0.1M87.2 0.1L-5.0 -4.1M-5.0 5.9L40.3 3.2M40.3 3.2L85.6 0.5M85.6 0.5L130.9 -2.3M130.9 -2.3L176.2 -5.0M364.0 12.5L271.8 8.3M271.8 8.3L179.5 4.1M179.5 4.1L87.2 -0.1M87.2 -0.1L-5.0 -4.2M-5.0 5.7L39.9 3.0M39.9 3.0L84.8 0.3M84.8 0.3L129.7 -2.3M129.7 -2.3L174.5 -5.0M364.0 12.2L271.8 8.1M271.8 8.1L179.5 3.9M179.5 3.9L87.2 -0.2M87.2 -0.2L-5.0 -4.3M-5.0 5.4L39.5 2.8M39.5 2.8L83.9 0.2M83.9 0.2L128.4 -2.4M128.4 -2.4L172.8 -5.0M364.0 11.9L271.8 7.8M271.8 7.8L179.5 3.7M179.5 3.7L87.2 -0.3M87.2 -0.3L-5.0 -4.4M-5.0 5.2L39.0 2.7M39.0 2.7L83.1 0.1M83.1 0.1L127.1 -2.4M127.1 -2.4L171.1 -5.0M364.0 11.7L271.8 7.6M271.8 7.6L179.5 3.6M179.5 3.6L87.2 -0.5M87.2 -0.5L-5.0 -4.5M-5.0 5.0L38.6 2.5M38.6 2.5L82.2 -0.0M82.2 -0.0L125.8 -2.5M125.8 -2.5L169.4 -5.0M364.0 11.4L271.8 7.4M271.8 7.4L179.5 3.4M179.5 3.4L87.2 -0.6M87.2 -0.6L-5.0 -4.6M-5.0 4.6L80.5 -0.2M80.5 -0.2L166.0 -5.0M364.0 10.9L271.8 7.0M271.8 7.0L179.5 3.1M179.5 3.1L87.2 -0.9M87.2 -0.9L-5.0 -4.8M-5.0 4.4L79.7 -0.3M79.7 -0.3L164.3 -5.0M364.0 10.7L271.8 6.8M271.8 6.8L179.5 2.9M179.5 2.9L87.2 -1.0M87.2 -1.0L-5.0 -4.9M-5.0 4.2L78.8 -0.4M78.8 -0.4L162.6 -5.0M364.0 10.5L271.8 6.6M271.8 6.6L179.6 2.7M179.6 2.7L87.4 -1.1M87.4 -1.1L-4.8 -5.0M-5.0 4.0L77.9 -0.5M77.9 -0.5L160.9 -5.0M364.0 10.3L272.3 6.4M272.3 6.4L180.7 2.6M180.7 2.6L89.0 -1.2M89.0 -1.2L-2.7 -5.0M-5.0 3.8L77.1 -0.6M77.1 -0.6L159.2 -5.0M364.0 10.0L272.9 6.3M272.9 6.3L181.7 2.5M181.7 2.5L90.6 -1.2M90.6 -1.2L-0.6 -5.0M-5.0 3.6L76.2 -0.7M76.2 -0.7L157.4 -5.0M364.0 9.8L273.4 6.1M273.4 6.1L182.8 2.4M182.8 2.4L92.2 -1.3M92.2 -1.3L1.6 -5.0M-5.0 3.4L75.4 -0.8M75.4 -0.8L155.7 -5.0M364.0 9.6L273.9 6.0M273.9 6.0L183.8 2.3M183.8 2.3L93.8 -1.3M93.8 -1.3L3.7 -5.0M-5.0 3.2L74.5 -0.9M74.5 -0.9L154.0 -5.0M364.0 9.4L274.4 5.8M274.4 5.8L184.9 2.2M184.9 2.2L95.3 -1.4M95.3 -1.4L5.8 -5.0M-5.0 3.0L73.6 -1.0M73.6 -1.0L152.3 -5.0M364.0 9.2L275.0 5.6M275.0 5.6L185.9 2.1M185.9 2.1L96.9 -1.5M96.9 -1.5L7.9 -5.0M-5.0 2.7L71.9 -1.2M71.9 -1.2L148.8 -5.0M364.0 8.8L276.0 5.3M276.0 5.3L188.0 1.9M188.0 1.9L100.1 -1.6M100.1 -1.6L12.1 -5.0M-5.0 2.5L71.0 -1.2M71.0 -1.2L147.1 -5.0M364.0 8.6L276.5 5.2M276.5 5.2L189.1 1.8M189.1 1.8L101.6 -1.6M101.6 -1.6L14.2 -5.0M-5.0 2.3L70.2 -1.3M70.2 -1.3L145.3 -5.0M364.0 8.4L277.1 5.1M277.1 5.1L190.1 1.7M190.1 1.7L103.2 -1.6M103.2 -1.6L16.3 -5.0M-5.0 2.2L69.3 -1.4M69.3 -1.4L143.6 -5.0M364.0 8.2L277.6 4.9M277.6 4.9L191.2 1.6M191.2 1.6L104.8 -1.7M104.8 -1.7L18.4 -5.0M-5.0 2.0L68.4 -1.5M68.4 -1.5L141.8 -5.0M364.0 8.0L278.1 4.8M278.1 4.8L192.2 1.5M192.2 1.5L106.3 -1.7M106.3 -1.7L20.4 -5.0M-5.0 1.9L67.5 -1.6M67.5 -1.6L140.1 -5.0M364.0 7.9L278.6 4.6M278.6 4.6L193.3 1.4M193.3 1.4L107.9 -1.8M107.9 -1.8L22.5 -5.0M-5.0 1.7L66.7 -1.6M66.7 -1.6L138.3 -5.0M364.0 7.7L279.1 4.5M279.1 4.5L194.3 1.3M194.3 1.3L109.4 -1.8M109.4 -1.8L24.6 -5.0M-5.0 1.6L65.8 -1.7M65.8 -1.7L136.6 -5.0M364.0 7.5L279.7 4.4M279.7 4.4L195.3 1.3M195.3 1.3L111.0 -1.9M111.0 -1.9L26.7 -5.0M-5.0 1.4L64.9 -1.8M64.9 -1.8L134.8 -5.0M364.0 7.3L280.2 4.3M280.2 4.3L196.4 1.2M196.4 1.2L112.6 -1.9M112.6 -1.9L28.7 -5.0M-5.0 1.1L63.2 -1.9M63.2 -1.9L131.3 -5.0M364.0 7.0L281.2 4.0M281.2 4.0L198.4 1.0M198.4 1.0L115.7 -2.0M115.7 -2.0L32.9 -5.0M-5.0 1.0L62.3 -2.0M62.3 -2.0L129.5 -5.0M364.0 6.8L199.5 0.9M199.5 0.9L34.9 -5.0M-5.0 0.9L61.4 -2.1M61.4 -2.1L127.8 -5.0M364.0 6.7L200.5 0.8M200.5 0.8L37.0 -5.0M-5.0 0.7L60.5 -2.1M60.5 -2.1L126.0 -5.0M364.0 6.5L201.5 0.8M201.5 0.8L39.0 -5.0M-5.0 0.6L59.6 -2.2M59.6 -2.2L124.2 -5.0M364.0 6.4L202.5 0.7M202.5 0.7L41.1 -5.0M-5.0 0.5L58.7 -2.3M58.7 -2.3L122.5 -5.0M364.0 6.2L203.6 0.6M203.6 0.6L43.1 -5.0M-5.0 0.3L57.8 -2.3M57.8 -2.3L120.7 -5.0M364.0 6.1L204.6 0.5M204.6 0.5L45.2 -5.0M-5.0 0.2L57.0 -2.4M57.0 -2.4L118.9 -5.0M364.0 5.9L205.6 0.5M205.6 0.5L47.2 -5.0M-5.0 0.1L56.1 -2.5M56.1 -2.5L117.1 -5.0M364.0 5.8L206.6 0.4M206.6 0.4L49.3 -5.0M-5.0 -0.1L54.3 -2.6M54.3 -2.6L113.6 -5.0M364.0 5.5L208.7 0.2M208.7 0.2L53.3 -5.0M-5.0 -0.3L53.4 -2.6M53.4 -2.6L111.8 -5.0M364.0 5.3L209.7 0.2M209.7 0.2L55.3 -5.0M-5.0 -0.4L52.5 -2.7M52.5 -2.7L110.0 -5.0M364.0 5.2L210.7 0.1M210.7 0.1L57.4 -5.0M-5.0 -0.5L51.6 -2.7M51.6 -2.7L108.2 -5.0M364.0 5.1L211.7 0.0M211.7 0.0L59.4 -5.0M-5.0 -0.6L50.7 -2.8M50.7 -2.8L106.4 -5.0M364.0 4.9L212.7 -0.0M212.7 -0.0L61.4 -5.0M-5.0 -0.7L49.8 -2.9M49.8 -2.9L104.6 -5.0M364.0 4.8L213.7 -0.1M213.7 -0.1L63.4 -5.0M-5.0 -0.8L48.9 -2.9M48.9 -2.9L102.8 -5.0M364.0 4.7L214.7 -0.2M214.7 -0.2L65.4 -5.0M-5.0 -0.9L48.0 -3.0M48.0 -3.0L101.0 -5.0M364.0 4.6L215.7 -0.2M215.7 -0.2L67.4 -5.0M-5.0 -1.0L47.1 -3.0M47.1 -3.0L99.2 -5.0M364.0 4.4L216.7 -0.3M216.7 -0.3L69.4 -5.0M-5.0 -1.2L45.3 -3.1M45.3 -3.1L95.6 -5.0M364.0 4.2L218.7 -0.4M218.7 -0.4L73.4 -5.0M-5.0 -1.3L44.4 -3.2M44.4 -3.2L93.7 -5.0M364.0 4.1L219.7 -0.5M219.7 -0.5L75.4 -5.0M-5.0 -1.4L43.5 -3.2M43.5 -3.2L91.9 -5.0M364.0 3.9L220.7 -0.5M220.7 -0.5L77.4 -5.0M-5.0 -1.5L42.5 -3.3M42.5 -3.3L90.1 -5.0M364.0 3.8L221.7 -0.6M221.7 -0.6L79.4 -5.0M-5.0 -1.6L41.6 -3.3M41.6 -3.3L88.3 -5.0M364.0 3.7L222.7 -0.6M222.7 -0.6L81.4 -5.0M-5.0 -1.7L40.7 -3.4M40.7 -3.4L86.4 -5.0M364.0 3.6L223.7 -0.7M223.7 -0.7L83.4 -5.0M-5.0 -1.8L84.6 -5.0M364.0 3.5L224.7 -0.8M224.7 -0.8L85.3 -5.0M-5.0 -1.9L82.8 -5.0M364.0 3.4L225.7 -0.8M225.7 -0.8L87.3 -5.0M-5.0 -2.0L81.0 -5.0M364.0 3.3L226.6 -0.9M226.6 -0.9L89.3 -5.0M-5.0 -2.2L77.3 -5.0M364.0 3.1L228.6 -1.0M228.6 -1.0L93.2 -5.0M-5.0 -2.2L75.4 -5.0M364.0 2.9L229.6 -1.0M229.6 -1.0L95.2 -5.0M-5.0 -2.3L73.6 -5.0M364.0 2.8L230.6 -1.1M230.6 -1.1L97.1 -5.0M-5.0 -2.4L71.7 -5.0M364.0 2.7L231.5 -1.1M231.5 -1.1L99.1 -5.0M-5.0 -2.5L69.9 -5.0M364.0 2.6L232.5 -1.2M232.5 -1.2L101.0 -5.0M-5.0 -2.6L68.0 -5.0M364.0 2.5L233.5 -1.2M233.5 -1.2L103.0 -5.0M-5.0 -2.7L66.2 -5.0M364.0 2.4L234.5 -1.3M234.5 -1.3L104.9 -5.0M-5.0 -2.7L64.3 -5.0M364.0 2.3L235.4 -1.3M235.4 -1.3L106.9 -5.0M-5.0 -2.8L62.4 -5.0M364.0 2.3L236.4 -1.4M236.4 -1.4L108.8 -5.0M-5.0 -3.0L58.7 -5.0M364.0 2.1L238.3 -1.5M238.3 -1.5L112.7 -5.0M-5.0 -3.0L56.8 -5.0M364.0 2.0L239.3 -1.5M239.3 -1.5L114.6 -5.0M-5.0 -3.1L55.0 -5.0M364.0 1.9L240.3 -1.6M240.3 -1.6L116.5 -5.0M-5.0 -3.2L53.1 -5.0M364.0 1.8L241.2 -1.6M241.2 -1.6L118.5 -5.0M-5.0 -3.3L51.2 -5.0M364.0 1.7L242.2 -1.6M242.2 -1.6L120.4 -5.0M-5.0 -3.3L49.3 -5.0M364.0 1.6L243.1 -1.7M243.1 -1.7L122.3 -5.0M-5.0 -3.4L47.4 -5.0M364.0 1.5L244.1 -1.7M244.1 -1.7L124.2 -5.0M-5.0 -3.5L45.6 -5.0M364.0 1.4L245.1 -1.8M245.1 -1.8L126.1 -5.0M-5.0 -3.5L43.7 -5.0M364.0 1.4L246.0 -1.8M246.0 -1.8L128.0 -5.0M-5.0 -3.7L39.9 -5.0M364.0 1.2L247.9 -1.9M247.9 -1.9L131.8 -5.0M-5.0 -3.7L38.0 -5.0M364.0 1.1L248.9 -1.9M248.9 -1.9L133.7 -5.0M-5.0 -3.8L36.1 -5.0M364.0 1.0L249.8 -2.0M249.8 -2.0L135.6 -5.0M-5.0 -3.9L34.2 -5.0M364.0 1.0L250.8 -2.0M250.8 -2.0L137.5 -5.0M-5.0 -3.9L32.2 -5.0M364.0 0.9L251.7 -2.1M251.7 -2.1L139.4 -5.0M-5.0 -4.0L30.3 -5.0M364.0 0.8L252.6 -2.1M252.6 -2.1L141.3 -5.0M-5.0 -4.0L28.4 -5.0M364.0 0.7L253.6 -2.1M253.6 -2.1L143.2 -5.0M-5.0 -4.1L26.5 -5.0M364.0 0.6L254.5 -2.2M254.5 -2.2L145.1 -5.0M-5.0 -4.2L24.6 -5.0M364.0 0.6L255.5 -2.2M255.5 -2.2L146.9 -5.0M-5.0 -4.3L20.7 -5.0M364.0 0.4L257.3 -2.3M257.3 -2.3L150.7 -5.0M-5.0 -4.3L18.8 -5.0M364.0 0.3L258.3 -2.3M258.3 -2.3L152.6 -5.0M-5.0 -4.4L16.9 -5.0M364.0 0.3L259.2 -2.4M259.2 -2.4L154.4 -5.0M-5.0 -4.5L14.9 -5.0M364.0 0.2L260.1 -2.4M260.1 -2.4L156.3 -5.0M-5.0 -4.5L13.0 -5.0M364.0 0.1L261.1 -2.4M261.1 -2.4L158.1 -5.0M-5.0 -4.6L11.1 -5.0M364.0 0.1L262.0 -2.5M262.0 -2.5L160.0 -5.0M-5.0 -4.6L9.1 -5.0M364.0 -0.0L262.9 -2.5M262.9 -2.5L161.9 -5.0M-5.0 -4.7L7.2 -5.0M364.0 -0.1L263.9 -2.5M263.9 -2.5L163.7 -5.0M-5.0 -4.7L5.2 -5.0M364.0 -0.1L264.8 -2.6M264.8 -2.6L165.6 -5.0M-5.0 -4.8L1.3 -5.0M364.0 -0.3L266.6 -2.6M266.6 -2.6L169.2 -5.0M-5.0 -4.9L-0.7 -5.0M364.0 -0.3L267.5 -2.7M267.5 -2.7L171.1 -5.0M-5.0 -4.9L-2.6 -5.0M364.0 -0.4L268.5 -2.7M268.5 -2.7L172.9 -5.0M-5.0 -5.0L-4.6 -5.0M364.0 -0.5L269.4 -2.7M269.4 -2.7L174.8 -5.0M364.0 -0.5L270.3 -2.8M270.3 -2.8L176.6 -5.0M364.0 -0.6L271.2 -2.8M271.2 -2.8L178.4 -5.0M364.0 -0.7L272.1 -2.8M272.1 -2.8L180.2 -5.0M364.0 -0.7L273.0 -2.9M273.0 -2.9L182.1 -5.0M364.0 -0.8L273.9 -2.9M273.9 -2.9L183.9 -5.0M364.0 -0.9L275.8 -3.0M275.8 -3.0L187.5 -5.0M364.0 -1.0L276.7 -3.0M276.7 -3.0L189.3 -5.0M364.0 -1.0L191.1 -5.0M364.0 -1.1L192.9 -5.0M364.0 -1.1L194.7 -5.0M364.0 -1.2L196.5 -5.0M364.0 -1.2L198.3 -5.0M364.0 -1.3L200.1 -5.0M364.0 -1.4L201.9 -5.0M364.0 -1.5L205.5 -5.0M364.0 -1.5L207.3 -5.0M364.0 -1.6L209.1 -5.0M364.0 -1.6L210.8 -5.0M364.0 -1.7L212.6 -5.0M364.0 -1.7L214.4 -5.0M364.0 -1.8L216.2 -5.0M364.0 -1.8L217.9 -5.0M364.0 -1.9L219.7 -5.0M364.0 -2.0L223.2 -5.0M364.0 -2.0L225.0 -5.0M364.0 -2.1L226.7 -5.0M364.0 -2.1L228.5 -5.0M364.0 -2.2L230.2 -5.0M364.0 -2.2L232.0 -5.0M364.0 -2.3L233.7 -5.0M364.0 -2.3L235.5 -5.0M364.0 -2.4L237.2 -5.0M364.0 -2.4L240.7 -5.0M364.0 -2.5L242.4 -5.0M364.0 -2.5L244.1 -5.0M364.0 -2.6L245.8 -5.0M364.0 -2.6L247.6 -5.0M364.0 -2.7L249.3 -5.0M364.0 -2.7L251.0 -5.0M364.0 -2.8L252.7 -5.0M364.0 -2.8L254.4 -5.0M364.0 -2.9L257.8 -5.0M364.0 -2.9L259.5 -5.0M364.0 -3.0L261.2 -5.0M364.0 -3.0L262.9 -5.0M364.0 -3.0L264.6 -5.0M364.0 -3.1L266.3 -5.0M364.0 -3.1L268.0 -5.0M364.0 -3.2L269.7 -5.0M364.0 -3.2L271.4 -5.0M364.0 -3.3L274.8 -5.0M364.0 -3.3L276.4 -5.0M364.0 -3.4L278.1 -5.0M364.0 -3.4L279.8 -5.0M364.0 -3.4L281.5 -5.0M364.0 -3.5L283.1 -5.0M364.0 -3.5L284.8 -5.0M364.0 -3.5L286.5 -5.0M364.0 -3.6L288.1 -5.0M364.0 -3.6L291.4 -5.0M364.0 -3.7L293.1 -5.0M364.0 -3.7L294.7 -5.0M364.0 -3.7L296.4 -5.0M364.0 -3.8L298.0 -5.0M364.0 -3.8L299.7 -5.0M364.0 -3.8L301.3 -5.0M364.0 -3.9L303.0 -5.0M364.0 -3.9L304.6 -5.0M364.0 -4.0L307.9 -5.0M364.0 -4.0L309.5 -5.0M364.0 -4.0L311.1 -5.0M364.0 -4.1L312.7 -5.0M364.0 -4.1L314.4 -5.0M364.0 -4.1L316.0 -5.0M364.0 -4.2L317.6 -5.0M364.0 -4.2L319.2 -5.0M364.0 -4.2L320.8 -5.0M364.0 -4.3L324.0 -5.0M364.0 -4.3L325.6 -5.0M364.0 -4.4L327.2 -5.0M364.0 -4.4L328.8 -5.0M364.0 -4.4L330.4 -5.0M364.0 -4.4L332.0 -5.0M364.0 -4.5L333.6 -5.0M364.0 -4.5L335.2 -5.0M364.0 -4.5L336.8 -5.0M364.0 -4.6L340.0 -5.0M364.0 -4.6L341.6 -5.0M364.0 -4.6L343.1 -5.0M364.0 -4.7L344.7 -5.0M364.0 -4.7L346.3 -5.0M364.0 -4.7L347.9 -5.0M364.0 -4.8L349.4 -5.0M364.0 -4.8L351.0 -5.0M364.0 -4.8L352.6 -5.0M364.0 -4.9L355.7 -5.0M364.0 -4.9L357.3 -5.0M364.0 -4.9L358.8 -5.0M364.0 -4.9L360.4 -5.0M364.0 -5.0L361.9 -5.0M364.0 -5.0L363.5 -5.0" stroke="#9a9a9a" stroke-width="0.5" stroke-opacity="0.2"/><path d="M364.0 6.6L355.8 3.7M364.0 8.0L355.5 4.8M364.0 9.6L355.1 6.0M355.1 6.0L346.2 2.3M354.4 9.0L344.7 4.4M344.7 4.4L335.1 -0.3M344.0 5.7L334.0 0.3M343.2 7.3L332.9 1.2M331.7 2.2L321.0 -5.0M325.9 -0.2L319.5 -5.0M324.6 0.8L318.0 -5.0M323.3 2.2L316.5 -5.0M257.2 14.3L293.8 -5.0M251.9 14.3L292.3 -5.0M248.5 13.5L290.7 -5.0M247.2 12.0L289.2 -5.0M87.2 35.3L-5.0 21.2M87.2 33.5L-5.0 19.9M200.7 20.4L241.9 7.7M87.2 31.8L-5.0 18.7M198.5 17.4L239.2 6.2M179.5 41.1L87.2 28.8M87.2 28.8L-5.0 16.6M197.4 16.2L237.9 5.6M179.5 39.3L87.2 27.5M87.2 27.5L-5.0 15.6M156.1 25.1L196.3 15.0M179.5 37.7L87.2 26.2M155.2 23.5L195.2 14.0M271.8 47.3L179.5 36.2M179.5 36.2L87.2 25.0M154.3 22.1L194.1 13.1M271.8 45.6L179.5 34.7M179.5 34.7L87.2 23.9M113.8 29.4L153.4 20.8M153.4 20.8L193.0 12.2M271.8 43.9L179.5 33.4M179.5 33.4L87.2 22.8M113.1 27.8L152.5 19.6M152.5 19.6L191.9 11.4M364.0 52.6L271.8 42.4M271.8 42.4L179.5 32.1M73.3 34.2L112.5 26.4M112.5 26.4L151.6 18.5M364.0 50.9L271.8 40.9M271.8 40.9L179.5 30.9M72.9 32.5L111.8 25.0M111.8 25.0L150.7 17.5M364.0 49.2L271.8 39.5M271.8 39.5L179.5 29.7M33.5 36.4L72.0 29.5M72.0 29.5L110.4 22.6M110.4 22.6L148.9 15.7M364.0 46.2L271.8 36.9M271.8 36.9L179.5 27.6M33.3 34.7L71.5 28.1M71.5 28.1L109.8 21.5M364.0 44.7L271.8 35.7M-5.0 39.6L33.0 33.2M33.0 33.2L71.1 26.8M71.1 26.8L109.1 20.5M364.0 43.4L271.8 34.5M-5.0 37.9L32.8 31.8M32.8 31.8L70.6 25.6M70.6 25.6L108.4 19.5M364.0 42.1L271.8 33.4M-5.0 36.3L32.6 30.4M32.6 30.4L70.2 24.5M-5.0 34.8L32.4 29.1M32.4 29.1L69.7 23.4M-5.0 33.4L32.1 27.9M-5.0 32.1L31.9 26.8M-5.0 30.9L31.7 25.7" stroke="#9a9a9a" stroke-width="0.5" stroke-opacity="0.3"/><path d="M364.0 12.6L354.6 8.2M364.0 13.7L354.4 9.0M364.0 15.0L354.2 10.0M354.0 11.0L344.0 5.7M353.8 12.2L343.6 6.5M353.6 13.5L343.2 7.3M342.5 9.3L331.7 2.2M342.1 10.6L331.2 2.8M338.6 9.5L332.2 4.7M332.2 4.7L325.9 -0.2M331.7 5.6L325.2 0.3M331.2 6.7L324.6 0.8M330.6 7.9L323.9 1.5M322.0 4.3L315.0 -5.0M321.4 5.8L314.3 -5.0M278.0 14.3L299.9 -5.0M275.4 14.3L299.1 -5.0M272.8 14.3L298.4 -5.0M270.2 14.3L297.6 -5.0M262.4 14.3L295.3 -5.0M87.2 45.3L-5.0 28.5M87.2 44.0L-5.0 27.5M87.2 42.7L-5.0 26.6M87.2 41.5L-5.0 25.7M87.2 40.4L-5.0 24.9M87.2 39.3L-5.0 24.1M204.6 27.6L246.5 11.3M204.0 26.4L245.9 10.7M179.5 51.8L87.2 37.2M87.2 37.2L-5.0 22.6M203.5 25.2L245.2 10.1M179.5 50.5L87.2 36.2M202.9 24.1L244.5 9.5M179.5 49.3L87.2 35.3M179.5 48.1L87.2 34.4M201.8 22.1L243.2 8.6M179.5 47.0L87.2 33.5M271.8 59.2L179.5 45.9M179.5 45.9L87.2 32.6M159.6 33.0L200.7 20.4M271.8 58.0L179.5 44.9M179.5 44.9L87.2 31.8M159.2 31.9L200.2 19.6M271.8 56.7L179.5 43.9M158.3 29.6L199.1 18.1M271.8 54.4L179.5 42.0M157.8 28.6L198.5 17.4M271.8 53.3L179.5 41.1M116.8 38.6L157.4 27.7M364.0 64.3L271.8 52.2M271.8 52.2L179.5 40.2M116.5 37.3L156.9 26.8M156.9 26.8L197.4 16.2M364.0 63.0L271.8 51.2M271.8 51.2L179.5 39.3M116.1 36.2L156.5 25.9M364.0 61.9L271.8 50.2M115.8 35.1L156.1 25.1M364.0 60.7L271.8 49.2M271.8 49.2L179.5 37.7M115.5 34.0L155.6 24.3M364.0 59.6L271.8 48.3M75.1 42.5L115.1 33.0M115.1 33.0L155.2 23.5M364.0 58.5L271.8 47.3M74.9 41.3L114.8 32.1M364.0 57.5L271.8 46.4M74.6 40.2L114.5 31.1M114.5 31.1L154.3 22.1M364.0 56.4L271.8 45.6M74.4 39.1L114.1 30.3M34.6 46.6L74.2 38.0M74.2 38.0L113.8 29.4M364.0 54.5L271.8 43.9M34.5 45.4L74.0 37.0M74.0 37.0L113.5 28.6M34.4 44.2L73.7 36.0M73.7 36.0L113.1 27.8M34.3 43.1L73.5 35.1M-5.0 49.9L34.2 42.1M34.2 42.1L73.3 34.2M-5.0 48.7L34.0 41.0M34.0 41.0L73.1 33.3M-5.0 47.5L33.9 40.0M33.9 40.0L72.9 32.5M-5.0 46.4L33.8 39.1M-5.0 44.3L33.6 37.2M-5.0 43.3L33.5 36.4M-5.0 41.4L33.3 34.7" stroke="#9a9a9a" stroke-width="0.5" stroke-opacity="0.45"/><path d="M364.0 16.4L354.0 11.0M364.0 17.9L353.8 12.2M364.0 19.6L353.6 13.5M364.0 21.5L353.4 14.9M353.4 14.9L342.9 8.3M353.2 16.5L342.5 9.3M353.1 18.3L342.1 10.6M344.9 14.4L338.6 9.5M338.1 10.9L331.7 5.6M337.7 12.5L331.2 6.7M330.1 9.4L323.3 2.2M329.5 11.3L322.7 3.2M320.7 7.8L313.5 -5.0M320.1 10.6L312.8 -5.0M296.1 14.3L305.2 -5.0M293.5 14.3L304.5 -5.0M290.9 14.3L303.7 -5.0M288.3 14.3L302.9 -5.0M285.8 14.3L302.2 -5.0M283.2 14.3L301.4 -5.0M280.6 14.3L300.7 -5.0M87.2 54.7L-5.0 35.2M87.2 51.3L-5.0 32.7M87.2 49.7L-5.0 31.6M87.2 48.1L-5.0 30.5M87.2 46.7L-5.0 29.5M179.5 62.2L87.2 45.3M211.6 33.6L251.9 14.3M179.5 60.5L87.2 44.0M207.2 33.6L249.3 14.3M179.5 58.9L87.2 42.7M206.2 32.0L248.5 13.5M179.5 57.3L87.2 41.5M205.7 30.4L247.8 12.7M179.5 55.9L87.2 40.4M205.1 29.0L247.2 12.0M271.8 69.6L179.5 54.4M179.5 54.4L87.2 39.3M271.8 67.9L179.5 53.1M179.5 53.1L87.2 38.2M271.8 66.3L179.5 51.8M161.8 40.3L203.5 25.2M271.8 64.8L179.5 50.5M161.4 38.6L202.9 24.1M364.0 77.4L271.8 63.3M271.8 63.3L179.5 49.3M160.9 37.1L202.4 23.1M364.0 75.7L271.8 61.9M271.8 61.9L179.5 48.1M160.5 35.7L201.8 22.1M364.0 74.1L271.8 60.6M271.8 60.6L179.5 47.0M160.0 34.3L201.3 21.2M364.0 72.5L271.8 59.2M118.4 45.7L159.6 33.0M364.0 71.0L271.8 58.0M118.1 44.1L159.2 31.9M364.0 69.6L271.8 56.7M117.5 41.2L158.3 29.6M364.0 66.8L271.8 54.4M76.4 51.1L117.1 39.8M117.1 39.8L157.8 28.6M364.0 65.5L271.8 53.3M76.2 49.5L116.8 38.6M76.0 47.9L116.5 37.3M35.4 56.8L75.8 46.5M75.8 46.5L116.1 36.2M35.3 55.1L75.5 45.1M75.5 45.1L115.8 35.1M35.2 53.5L75.3 43.8M75.3 43.8L115.5 34.0M35.0 52.0L75.1 42.5M-5.0 59.9L34.9 50.6M34.9 50.6L74.9 41.3M-5.0 58.2L34.8 49.2M34.8 49.2L74.6 40.2M-5.0 56.7L34.7 47.9M34.7 47.9L74.4 39.1M-5.0 55.2L34.6 46.6M-5.0 53.8L34.5 45.4M-5.0 52.5L34.4 44.2M-5.0 51.1L34.3 43.1" stroke="#9a9a9a" stroke-width="0.5" stroke-opacity="0.6"/><path d="M364.0 23.7L353.2 16.5M364.0 26.1L353.1 18.3M357.6 24.0L351.3 19.2M351.3 19.2L344.9 14.4M351.1 21.5L344.6 16.2M344.6 16.2L338.1 10.9M344.3 18.3L337.7 12.5M337.3 14.4L330.6 7.9M336.9 16.7L330.1 9.4M329.0 13.6L322.0 4.3M328.5 16.6L321.4 5.8M316.7 14.3L311.3 -5.0M314.1 14.3L310.5 -5.0M311.6 14.3L309.7 -5.0M309.0 14.3L309.0 -5.0M306.4 14.3L308.2 -5.0M303.8 14.3L307.5 -5.0M301.3 14.3L306.7 -5.0M298.7 14.3L306.0 -5.0M85.0 64.5L-5.0 42.7M87.2 62.8L-5.0 41.0M87.2 60.6L-5.0 39.5M87.2 58.5L-5.0 38.0M87.2 56.5L-5.0 36.6M179.5 74.1L87.2 54.7M233.9 33.6L265.0 14.3M179.5 69.8L87.2 51.3M229.4 33.6L262.4 14.3M179.5 67.7L87.2 49.7M225.0 33.6L259.8 14.3M179.5 65.8L87.2 48.1M220.5 33.6L257.2 14.3M271.8 81.2L179.5 63.9M179.5 63.9L87.2 46.7M216.1 33.6L254.6 14.3M271.8 79.0L179.5 62.2M271.8 77.0L179.5 60.5M271.8 75.0L179.5 58.9M364.0 88.9L271.8 73.1M271.8 73.1L179.5 57.3M163.6 48.2L205.7 30.4M364.0 86.8L271.8 71.3M271.8 71.3L179.5 55.9M163.1 46.0L205.1 29.0M364.0 84.8L271.8 69.6M162.7 43.9L204.6 27.6M364.0 82.8L271.8 67.9M162.2 42.0L204.0 26.4M364.0 80.9L271.8 66.3M120.1 55.4L161.8 40.3M364.0 79.1L271.8 64.8M119.8 53.2L161.4 38.6M119.4 51.1L160.9 37.1M119.1 49.2L160.5 35.7M77.5 60.5L118.8 47.4M118.8 47.4L160.0 34.3M77.3 58.4L118.4 45.7M77.1 56.4L118.1 44.1M35.8 64.3L76.6 52.7M76.6 52.7L117.5 41.2M35.7 62.3L76.4 51.1M-5.0 71.2L35.6 60.3M35.6 60.3L76.2 49.5M-5.0 69.1L35.5 58.5M35.5 58.5L76.0 47.9M-5.0 67.1L35.4 56.8M-5.0 65.1L35.3 55.1M-5.0 63.3L35.2 53.5M-5.0 61.5L35.0 52.0" stroke="#9a9a9a" stroke-width="0.5" stroke-opacity="0.8"/><path d="M364.0 28.9L357.6 24.0M364.0 32.1L357.5 26.8M357.5 26.8L351.1 21.5M364.0 35.8L357.4 30.0M357.4 30.0L350.9 24.2M350.9 24.2L344.3 18.3M364.0 40.3L357.3 33.8M357.3 33.8L350.6 27.3M350.6 27.3L344.0 20.9M344.0 20.9L337.3 14.4M357.2 38.3L350.4 31.1M350.4 31.1L343.6 23.9M343.6 23.9L336.9 16.7M350.2 35.8L343.3 27.6M343.3 27.6L336.4 19.5M336.4 19.5L329.5 11.3M343.0 32.2L336.0 22.9M336.0 22.9L329.0 13.6M335.6 27.4L328.5 16.6M335.1 33.4L327.9 20.6M327.9 20.6L320.7 7.8M327.4 26.1L320.1 10.6M322.1 33.6L316.7 14.3M317.7 33.6L314.1 14.3M313.4 33.6L311.6 14.3M309.0 33.6L309.0 14.3M304.6 33.6L306.4 14.3M300.2 33.6L303.8 14.3M103.1 95.5L-5.0 61.0M295.8 33.6L301.3 14.3M112.1 94.0L-5.0 58.1M291.4 33.6L298.7 14.3M121.1 92.7L-5.0 55.4M287.0 33.6L296.1 14.3M130.1 91.5L-5.0 52.9M282.6 33.6L293.5 14.3M139.1 90.3L67.0 70.4M67.0 70.4L-5.0 50.6M278.2 33.6L290.9 14.3M148.1 89.2L71.5 68.8M71.5 68.8L-5.0 48.4M273.7 33.6L288.3 14.3M238.0 109.1L157.0 88.2M157.0 88.2L76.0 67.3M76.0 67.3L-5.0 46.4M269.3 33.6L285.8 14.3M251.5 108.6L166.0 87.3M166.0 87.3L80.5 65.9M80.5 65.9L-5.0 44.5M264.9 33.6L283.2 14.3M264.9 108.2L174.9 86.4M174.9 86.4L85.0 64.5M260.5 33.6L280.6 14.3M271.8 106.2L179.5 84.5M179.5 84.5L87.2 62.8M256.1 33.6L278.0 14.3M364.0 123.9L271.8 102.8M271.8 102.8L179.5 81.7M179.5 81.7L87.2 60.6M227.9 52.9L251.6 33.6M251.6 33.6L275.4 14.3M364.0 120.1L271.8 99.6M271.8 99.6L179.5 79.0M179.5 79.0L87.2 58.5M221.6 52.9L247.2 33.6M247.2 33.6L272.8 14.3M364.0 116.5L271.8 96.5M271.8 96.5L179.5 76.5M179.5 76.5L87.2 56.5M215.3 52.9L242.8 33.6M242.8 33.6L270.2 14.3M364.0 113.1L271.8 93.6M271.8 93.6L179.5 74.1M202.8 52.9L233.9 33.6M364.0 106.8L271.8 88.3M271.8 88.3L179.5 69.8M196.5 52.9L229.4 33.6M364.0 103.8L271.8 85.8M271.8 85.8L179.5 67.7M155.4 72.1L190.2 52.9M190.2 52.9L225.0 33.6M364.0 101.1L271.8 83.4M271.8 83.4L179.5 65.8M147.3 72.1L183.9 52.9M183.9 52.9L220.5 33.6M364.0 98.4L271.8 81.2M139.1 72.1L177.6 52.9M177.6 52.9L216.1 33.6M364.0 95.9L271.8 79.0M131.0 72.1L171.3 52.9M171.3 52.9L211.6 33.6M364.0 93.5L271.8 77.0M122.8 72.1L165.0 52.9M165.0 52.9L207.2 33.6M364.0 91.1L271.8 75.0M79.5 87.6L121.7 69.0M121.7 69.0L164.0 50.5M164.0 50.5L206.2 32.0M79.3 83.6L121.4 65.9M121.4 65.9L163.6 48.2M79.1 79.9L121.1 62.9M121.1 62.9L163.1 46.0M36.9 92.9L78.8 76.5M78.8 76.5L120.8 60.2M120.8 60.2L162.7 43.9M36.8 89.1L78.6 73.4M78.6 73.4L120.4 57.7M120.4 57.7L162.2 42.0M-5.0 100.7L36.7 85.6M36.7 85.6L78.4 70.5M78.4 70.5L120.1 55.4M-5.0 96.8L36.6 82.3M36.6 82.3L78.2 67.7M78.2 67.7L119.8 53.2M-5.0 93.3L36.5 79.2M36.5 79.2L78.0 65.2M78.0 65.2L119.4 51.1M-5.0 89.9L36.4 76.3M36.4 76.3L77.7 62.8M77.7 62.8L119.1 49.2M-5.0 86.7L36.3 73.6M36.3 73.6L77.5 60.5M-5.0 83.8L36.1 71.1M36.1 71.1L77.3 58.4M-5.0 81.0L36.0 68.7M36.0 68.7L77.1 56.4M-5.0 75.8L35.8 64.3M-5.0 73.5L35.7 62.3" stroke="#9a9a9a" stroke-width="0.5"/><path d="M364.0 45.6L357.2 38.3M364.0 52.1L357.1 43.9M357.1 43.9L350.2 35.8M357.0 50.9L350.0 41.5M350.0 41.5L343.0 32.2M349.8 49.0L342.7 38.2M342.7 38.2L335.6 27.4M342.4 46.2L335.1 33.4M334.7 41.7L327.4 26.1M57.9 104.9L-5.0 79.9M66.9 102.7L-5.0 75.4M76.0 100.6L-5.0 71.3M85.0 98.8L-5.0 67.6M94.1 97.1L-5.0 64.1M211.1 130.0L103.1 95.5M229.2 130.0L112.1 94.0M247.2 130.0L121.1 92.7M277.9 52.9L287.0 33.6M265.2 130.0L130.1 91.5M271.6 52.9L282.6 33.6M283.1 130.0L211.1 110.1M211.1 110.1L139.1 90.3M265.4 52.9L278.2 33.6M301.1 130.0L224.6 109.6M224.6 109.6L148.1 89.2M259.1 52.9L273.7 33.6M319.0 130.0L238.0 109.1M252.9 52.9L269.3 33.6M337.0 130.0L251.5 108.6M246.6 52.9L264.9 33.6M354.9 130.0L264.9 108.2M240.4 52.9L260.5 33.6M364.0 127.9L271.8 106.2M212.2 72.1L234.1 52.9M234.1 52.9L256.1 33.6M204.1 72.1L227.9 52.9M196.0 72.1L221.6 52.9M187.9 72.1L215.3 52.9M140.6 91.4L171.7 72.1M171.7 72.1L202.8 52.9M130.6 91.4L163.5 72.1M163.5 72.1L196.5 52.9M120.6 91.4L155.4 72.1M110.6 91.4L147.3 72.1M62.2 110.7L100.6 91.4M100.6 91.4L139.1 72.1M50.3 110.7L90.7 91.4M90.7 91.4L131.0 72.1M38.5 110.7L80.7 91.4M80.7 91.4L122.8 72.1M-5.0 124.6L37.2 106.1M37.2 106.1L79.5 87.6M-5.0 119.0L37.1 101.3M37.1 101.3L79.3 83.6M-5.0 113.9L37.0 96.9M37.0 96.9L79.1 79.9M-5.0 109.2L36.9 92.9M-5.0 104.8L36.8 89.1" stroke="#9a9a9a" stroke-width="0.75"/><path d="M364.0 60.2L357.0 50.9M364.0 70.6L356.9 59.8M356.9 59.8L349.8 49.0M356.8 71.7L349.6 58.9M349.6 58.9L342.4 46.2M66.4 130.0L-5.0 96.6M349.4 72.9L342.0 57.3M342.0 57.3L334.7 41.7M84.5 130.0L-5.0 90.4M327.6 52.9L322.1 33.6M120.8 130.0L57.9 104.9M321.4 52.9L317.7 33.6M138.9 130.0L66.9 102.7M315.2 52.9L313.4 33.6M157.0 130.0L76.0 100.6M309.0 52.9L309.0 33.6M175.0 130.0L85.0 98.8M302.7 52.9L304.6 33.6M193.1 130.0L94.1 97.1M296.5 52.9L300.2 33.6M290.3 52.9L295.8 33.6M276.8 72.1L284.1 52.9M284.1 52.9L291.4 33.6M268.7 72.1L277.9 52.9M260.7 72.1L271.6 52.9M252.6 72.1L265.4 52.9M244.5 72.1L259.1 52.9M236.5 72.1L252.9 52.9M210.1 91.4L228.4 72.1M228.4 72.1L246.6 52.9M200.2 91.4L220.3 72.1M220.3 72.1L240.4 52.9M190.3 91.4L212.2 72.1M180.4 91.4L204.1 72.1M144.8 110.7L170.4 91.4M170.4 91.4L196.0 72.1M133.0 110.7L160.5 91.4M160.5 91.4L187.9 72.1M78.3 130.0L109.4 110.7M109.4 110.7L140.6 91.4M64.7 130.0L97.6 110.7M97.6 110.7L130.6 91.4M51.0 130.0L85.8 110.7M85.8 110.7L120.6 91.4M37.4 130.0L74.0 110.7M74.0 110.7L110.6 91.4M23.7 130.0L62.2 110.7M10.0 130.0L50.3 110.7M-3.7 130.0L38.5 110.7" stroke="#9a9a9a" stroke-width="1.0"/><path d="M11.8 130.0L-5.0 120.4M30.0 130.0L-5.0 111.4M48.2 130.0L-5.0 103.5M364.0 84.5L356.8 71.7M364.0 104.0L356.7 88.4M356.7 88.4L349.4 72.9M338.4 91.4L333.0 72.1M333.0 72.1L327.6 52.9M328.6 91.4L325.0 72.1M325.0 72.1L321.4 52.9M318.8 91.4L317.0 72.1M317.0 72.1L315.2 52.9M308.9 91.4L308.9 72.1M308.9 72.1L309.0 52.9M299.1 91.4L300.9 72.1M300.9 72.1L302.7 52.9M289.2 91.4L292.9 72.1M292.9 72.1L296.5 52.9M279.4 91.4L284.8 72.1M284.8 72.1L290.3 52.9M269.5 91.4L276.8 72.1M259.6 91.4L268.7 72.1M249.7 91.4L260.7 72.1M227.1 110.7L239.8 91.4M239.8 91.4L252.6 72.1M215.3 110.7L229.9 91.4M229.9 91.4L244.5 72.1M203.6 110.7L220.0 91.4M220.0 91.4L236.5 72.1M173.6 130.0L191.9 110.7M191.9 110.7L210.1 91.4M160.0 130.0L180.1 110.7M180.1 110.7L200.2 91.4M146.4 130.0L168.4 110.7M168.4 110.7L190.3 91.4M132.8 130.0L156.6 110.7M156.6 110.7L180.4 91.4M119.2 130.0L144.8 110.7M105.6 130.0L133.0 110.7" stroke="#9a9a9a" stroke-width="1.4"/><path d="M343.9 110.7L338.4 91.4M332.2 110.7L328.6 91.4M320.6 110.7L318.8 91.4M308.9 110.7L308.9 91.4M297.3 110.7L299.1 91.4M285.6 110.7L289.2 91.4M273.9 110.7L279.4 91.4M254.9 130.0L262.2 110.7M262.2 110.7L269.5 91.4M241.4 130.0L250.5 110.7M250.5 110.7L259.6 91.4M227.8 130.0L238.8 110.7M238.8 110.7L249.7 91.4M214.3 130.0L227.1 110.7M200.7 130.0L215.3 110.7M187.2 130.0L203.6 110.7" stroke="#9a9a9a" stroke-width="1.9"/><path d="M349.3 130.0L343.9 110.7M335.9 130.0L332.2 110.7M322.4 130.0L320.6 110.7M308.9 130.0L308.9 110.7M295.4 130.0L297.3 110.7M281.9 130.0L285.6 110.7M268.4 130.0L273.9 110.7" stroke="#9a9a9a" stroke-width="2.3"/><path d="M364.0 -3.7L356.2 -5.0M364.0 0.5L352.8 -2.3M352.8 -2.3L341.7 -5.0M345.5 3.3L336.2 -0.9M336.2 -0.9L327.0 -5.0M240.6 6.9L281.5 -5.0M149.8 16.6L188.5 9.4M188.5 9.4L227.2 2.2M227.2 2.2L265.9 -5.0M179.5 28.6L87.2 19.1M87.2 19.1L-5.0 9.6M-5.0 29.7L31.4 24.7M31.4 24.7L67.9 19.8M67.9 19.8L104.3 14.8M104.3 14.8L140.8 9.9M140.8 9.9L177.2 4.9M177.2 4.9L213.7 -0.0M213.7 -0.0L250.1 -5.0M364.0 35.4L271.8 27.8M271.8 27.8L179.5 20.1M179.5 20.1L87.2 12.4M87.2 12.4L-5.0 4.8M-5.0 20.5L54.8 14.2M54.8 14.2L114.6 7.8M114.6 7.8L174.3 1.4M174.3 1.4L234.1 -5.0M364.0 27.3L271.8 20.9M271.8 20.9L179.5 14.5M179.5 14.5L87.2 8.0M87.2 8.0L-5.0 1.6M-5.0 14.6L50.7 9.7M50.7 9.7L106.4 4.8M106.4 4.8L162.2 -0.1M162.2 -0.1L217.9 -5.0M364.0 21.5L271.8 16.0M271.8 16.0L179.5 10.4M179.5 10.4L87.2 4.9M87.2 4.9L-5.0 -0.7M-5.0 10.3L46.6 6.5M46.6 6.5L98.2 2.7M98.2 2.7L149.8 -1.2M149.8 -1.2L201.4 -5.0M364.0 17.2L271.8 12.3M271.8 12.3L179.5 7.4M179.5 7.4L87.2 2.5M87.2 2.5L-5.0 -2.4M-5.0 7.2L42.4 4.2M42.4 4.2L89.8 1.1M89.8 1.1L137.3 -1.9M137.3 -1.9L184.7 -5.0M364.0 13.9L271.8 9.5M271.8 9.5L179.5 5.1M179.5 5.1L87.2 0.7M87.2 0.7L-5.0 -3.7M-5.0 4.8L38.2 2.3M38.2 2.3L81.4 -0.1M81.4 -0.1L124.5 -2.6M124.5 -2.6L167.7 -5.0M364.0 11.2L271.8 7.2M271.8 7.2L179.5 3.2M179.5 3.2L87.2 -0.8M87.2 -0.8L-5.0 -4.7M-5.0 2.9L72.8 -1.1M72.8 -1.1L150.5 -5.0M364.0 9.0L275.5 5.5M275.5 5.5L187.0 2.0M187.0 2.0L98.5 -1.5M98.5 -1.5L10.0 -5.0M-5.0 1.3L64.0 -1.9M64.0 -1.9L133.1 -5.0M364.0 7.2L280.7 4.1M280.7 4.1L197.4 1.1M197.4 1.1L114.1 -2.0M114.1 -2.0L30.8 -5.0M-5.0 -0.0L55.2 -2.5M55.2 -2.5L115.4 -5.0M364.0 5.6L207.6 0.3M207.6 0.3L51.3 -5.0M-5.0 -1.1L46.2 -3.1M46.2 -3.1L97.4 -5.0M364.0 4.3L217.7 -0.3M217.7 -0.3L71.4 -5.0M-5.0 -2.1L79.1 -5.0M364.0 3.2L227.6 -0.9M227.6 -0.9L91.2 -5.0M-5.0 -2.9L60.6 -5.0M364.0 2.2L237.4 -1.4M237.4 -1.4L110.7 -5.0M-5.0 -3.6L41.8 -5.0M364.0 1.3L247.0 -1.9M247.0 -1.9L129.9 -5.0M-5.0 -4.2L22.7 -5.0M364.0 0.5L256.4 -2.3M256.4 -2.3L148.8 -5.0M-5.0 -4.8L3.3 -5.0M364.0 -0.2L265.7 -2.6M265.7 -2.6L167.4 -5.0M364.0 -0.8L274.9 -2.9M274.9 -2.9L185.7 -5.0M364.0 -1.4L203.7 -5.0M364.0 -1.9L221.5 -5.0M364.0 -2.4L238.9 -5.0M364.0 -2.8L256.1 -5.0M364.0 -3.2L273.1 -5.0M364.0 -3.6L289.8 -5.0M364.0 -3.9L306.2 -5.0M364.0 -4.3L322.4 -5.0M364.0 -4.6L338.4 -5.0M364.0 -4.8L354.1 -5.0" stroke="#c8c8c8" stroke-width="0.5" stroke-opacity="0.2"/><path d="M354.7 7.4L345.5 3.3M199.6 18.8L240.6 6.9M179.5 42.9L87.2 30.3M87.2 30.3L-5.0 17.6M72.4 30.9L111.1 23.8M111.1 23.8L149.8 16.6M364.0 47.7L271.8 38.1M271.8 38.1L179.5 28.6" stroke="#c8c8c8" stroke-width="0.5" stroke-opacity="0.3"/><path d="M364.0 11.5L354.7 7.4M267.6 14.3L296.9 -5.0M158.7 30.7L199.6 18.8M271.8 55.6L179.5 42.9M-5.0 45.3L33.7 38.1M33.7 38.1L72.4 30.9" stroke="#c8c8c8" stroke-width="0.5" stroke-opacity="0.45"/><path d="M319.3 14.3L312.0 -5.0M87.2 52.9L-5.0 34.0M117.8 42.6L158.7 30.7M364.0 68.2L271.8 55.6" stroke="#c8c8c8" stroke-width="0.5" stroke-opacity="0.6"/><path d="M238.3 33.6L267.6 14.3M179.5 71.9L87.2 52.9M76.9 54.5L117.8 42.6" stroke="#c8c8c8" stroke-width="0.5" stroke-opacity="0.8"/><path d="M35.9 66.4L76.9 54.5" stroke="#c8c8c8" stroke-width="0.75" stroke-opacity="0.8"/><path d="M271.8 90.9L179.5 71.9M-5.0 78.3L35.9 66.4" stroke="#c8c8c8" stroke-width="0.75"/><path d="M326.5 33.6L319.3 14.3M209.1 52.9L238.3 33.6M364.0 109.8L271.8 90.9" stroke="#c8c8c8" stroke-width="1.0"/><path d="M333.8 52.9L326.5 33.6M150.5 91.4L179.8 72.1M179.8 72.1L209.1 52.9" stroke="#c8c8c8" stroke-width="1.4"/><path d="M341.0 72.1L333.8 52.9M102.7 130.0L48.8 107.4M48.8 107.4L-5.0 84.8M121.2 110.7L150.5 91.4" stroke="#c8c8c8" stroke-width="1.9"/><path d="M362.8 130.0L355.5 110.7M355.5 110.7L348.3 91.4M348.3 91.4L341.0 72.1M92.0 130.0L121.2 110.7" stroke="#c8c8c8" stroke-width="2.3"/></svg>
<svg class="a" style="left:1695px;top:870px;" width="90" height="55" viewBox="0 0 90 55"><ellipse cx="39" cy="32" rx="11" ry="4.2" fill="none" stroke="#b8b8b8" stroke-width="1"/><path d="M5 38 L14 28 L22 22 L27 24 L20 32 L10 40Z" fill="#8d979b"/><path d="M23 12 L27 10 L35 18 L31 20Z" fill="#1c2030"/><path d="M27 17 L45 15 L62 16 L68 19 L80 20 L81 30 L66 31 L56 29 L44 30 L30 30 L26 26Z" fill="#2b2a3d"/><path d="M28 16 L37 15 L42 18 L30 22Z" fill="#4f4384"/><path d="M45 16 L60 15 L62 19 L47 20Z" fill="#4b4280"/><path d="M66 19 L80 20 L81 30 L67 30Z" fill="#23262c"/><circle cx="72" cy="23.5" r="1.6" fill="#a07a50"/><path d="M26 17 L28 17 L29 28 L27 28Z" fill="#c8a838"/><path d="M58 29 L63 29 L70 42 L66 43Z" fill="#262a3a"/><path d="M40 36 L43 32 L45 33 L41 38Z" fill="#ff1010"/></svg>
<div class="a t" style="top:933.0px;line-height:20px;font-size:15.5px;color:#f0f0f0;font-weight:bold;left:1242px;width:1000px;text-align:center;text-shadow:1px 1px 0 #000,-1px 0 1px #000,0 -1px 1px #000,1px 0 1px #000;">0:00 (000.0%) Frame 0</div>
<div class="a" style="left:1561px;top:956px;width:359px;height:1px;background:#232323;"></div>
<div class="a" style="left:1561px;top:957px;width:359px;height:36px;background:#3a3a3a;"></div>
<svg class="a" style="left:1890px;top:963px;" width="25" height="20" viewBox="0 0 25 20"><ellipse cx="12.5" cy="10" rx="12.5" ry="9.8" fill="#27508f"/><path d="M6 8.5 L10.5 4 H16 V9.5 L11.5 14Z" fill="#ffffff" transform="rotate(0)"/><circle cx="13.8" cy="6.3" r="1" fill="#27508f"/></svg>
<div class="a" style="left:0px;top:993px;width:1920px;height:26px;background:#191919;"></div>
<div class="a" style="left:0px;top:1020px;width:1920px;height:2px;background:#1d5862;"></div>
<div class="a" style="left:1786px;top:996px;width:1px;height:22px;background:#2a2a2a;"></div>
<div class="a" style="left:1821px;top:996px;width:1px;height:22px;background:#2a2a2a;"></div>
<div class="a" style="left:1854px;top:996px;width:1px;height:22px;background:#2a2a2a;"></div>
<div class="a" style="left:1886px;top:996px;width:1px;height:22px;background:#2a2a2a;"></div>
<svg class="a" style="left:1795px;top:999px;" width="18" height="18" viewBox="0 0 18 18"><ellipse cx="9" cy="10.5" rx="5" ry="6" fill="#c4c4c4"/><path d="M3 6 L1 3.5 M15 6 L17 3.5 M3.5 10.5 H0.5 M14.5 10.5 H17.5 M4 14.5 L1.5 17 M14 14.5 L16.5 17 M6 4.5 Q9 1.5 12 4.5" stroke="#c4c4c4" stroke-width="1.4" fill="none"/><path d="M2 2 L17 17" stroke="#191919" stroke-width="2.6"/><path d="M2.5 2 L17 16.5" stroke="#c4c4c4" stroke-width="1.2"/></svg>
<svg class="a" style="left:1828px;top:999px;" width="18" height="18" viewBox="0 0 18 18"><ellipse cx="9" cy="3.8" rx="6.5" ry="2.6" fill="#c4c4c4"/><path d="M2.5 6.5 Q9 10 15.5 6.5 V9 Q9 12.5 2.5 9Z M2.5 11.5 Q9 15 15.5 11.5 V14 Q9 17.5 2.5 14Z" fill="#c4c4c4"/><path d="M3 2 L16 17" stroke="#191919" stroke-width="2.4"/><path d="M3.5 2 L16 16.5" stroke="#c4c4c4" stroke-width="1.1"/></svg>
<svg class="a" style="left:1861px;top:999px;" width="18" height="18" viewBox="0 0 18 18"><path d="M2 9 Q9 2 16 9 Q9 16 2 9Z" fill="none" stroke="#c4c4c4" stroke-width="1.4"/><circle cx="9" cy="9" r="2.5" fill="#c4c4c4"/><path d="M2.5 2 L16 16" stroke="#c4c4c4" stroke-width="1.3"/><path d="M1 5 V1 H5 M13 1 H17 V5 M17 13 V17 H13" fill="none" stroke="#c4c4c4" stroke-width="1.1"/></svg>
<svg class="a" style="left:1893px;top:999px;" width="18" height="18" viewBox="0 0 18 18"><circle cx="9" cy="9" r="7.8" fill="none" stroke="#c4c4c4" stroke-width="1.3"/><path d="M5.3 9 L8 11.7 L12.8 6.6" fill="none" stroke="#c4c4c4" stroke-width="1.4"/></svg></body></html>
